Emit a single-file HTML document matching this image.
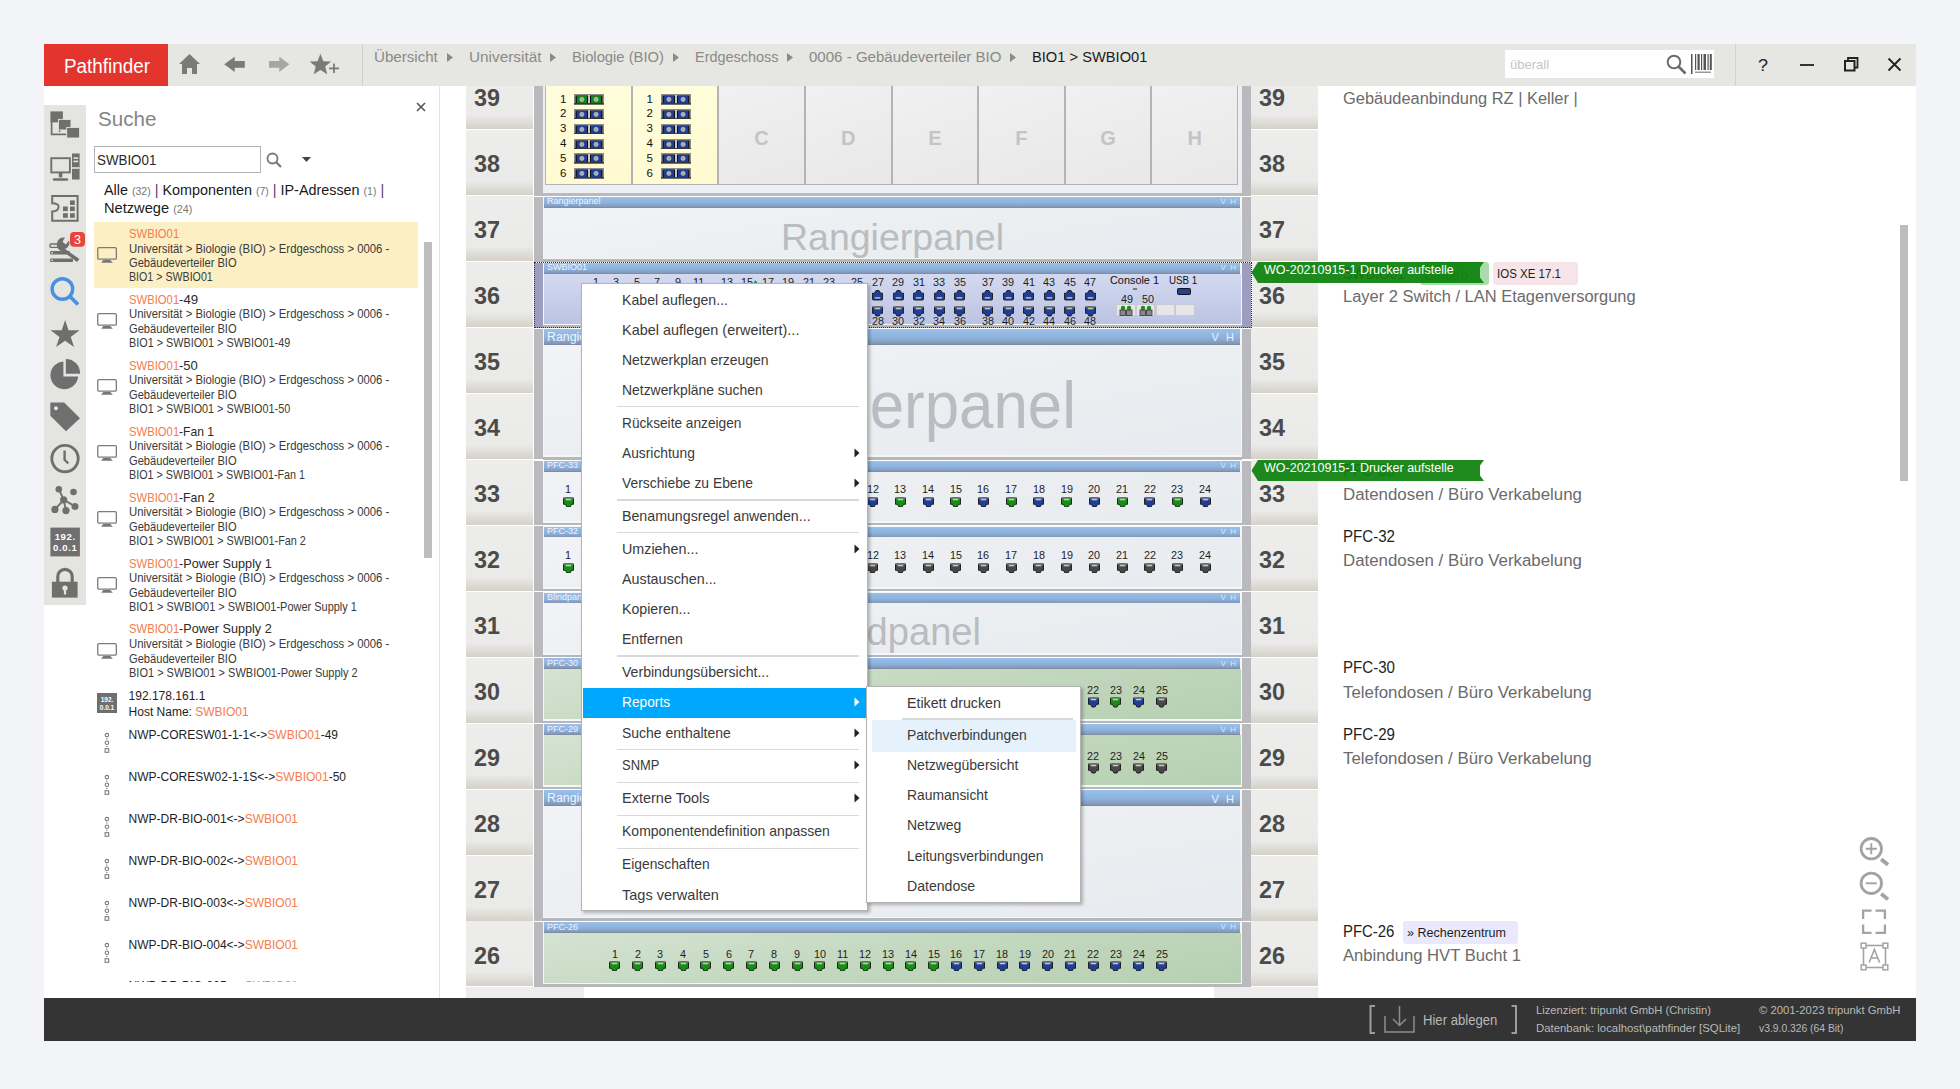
<!DOCTYPE html>
<html><head><meta charset="utf-8"><title>Pathfinder</title>
<style>
html,body{margin:0;padding:0;}
body{width:1960px;height:1089px;overflow:hidden;position:relative;background:#f3f4f8;font-family:"Liberation Sans",sans-serif;}
div{position:absolute;box-sizing:border-box;}
.t{white-space:pre;line-height:1;}
</style></head><body>
<svg width="0" height="0" style="position:absolute;left:0;top:0">
<defs>
<g id="pd"><path d="M0.5 1.5 Q0.5 0.5 1.5 0.5 H9.5 Q10.5 0.5 10.5 1.5 V7.3 H8.6 L7 10 H4 L2.4 7.3 H0.5 Z" stroke="#151515" stroke-width="0.9"/><rect x="1" y="0.3" width="9" height="1.3" fill="#8f8f8f"/><rect x="2.8" y="1.9" width="5.4" height="1.4" fill="#cbc9b2"/></g>
<g id="pu"><path d="M0.5 9 Q0.5 10 1.5 10 H9.5 Q10.5 10 10.5 9 V3.2 H8.6 L7 0.5 H4 L2.4 3.2 H0.5 Z" stroke="#151515" stroke-width="0.9"/><rect x="2.8" y="7.2" width="5.4" height="1.4" fill="#cbc9b2"/></g>
</defs></svg>
<div style="left:44px;top:44px;width:1872px;height:997px;background:#ffffff;"></div>
<div style="left:44px;top:44px;width:1872px;height:42px;background:#e6e6e2;"></div>
<div style="left:44px;top:44px;width:124px;height:42px;background:#e3352e;"></div>
<div class="t" style="left:63.60px;top:56.07px;font-size:20px;color:#ffffff;transform:scaleX(0.9432);transform-origin:0 0;">Pathfinder</div>
<svg style="position:absolute;left:178px;top:53px;" width="23" height="22" viewBox="0 0 23 22"><path d="M11.5 1 L1 11 L4 11 L4 21 L9 21 L9 15 L14 15 L14 21 L19 21 L19 11 L22 11 Z" fill="#7a7a7a"/></svg>
<svg style="position:absolute;left:220px;top:50px;" width="30" height="28" viewBox="0 0 30 28"><path d="M4.2 14.3 L14.7 6.7 L14.7 10.9 L24.8 10.9 L24.8 17.7 L14.7 17.7 L14.7 22 Z" fill="#7a7a7a"/></svg>
<svg style="position:absolute;left:265px;top:50px;" width="30" height="28" viewBox="0 0 30 28"><path d="M24.4 14.3 L14.3 6.7 L14.3 10.9 L4 10.9 L4 17.7 L14.3 17.7 L14.3 22 Z" fill="#a6a6a4"/></svg>
<svg style="position:absolute;left:305px;top:50px;" width="40" height="28" viewBox="0 0 40 28"><path d="M15.4 3.7 L18.3 11.3 L26.2 11.6 L20.2 16.6 L22.2 24.2 L15.4 19.9 L8.7 24.2 L10.7 16.6 L4.6 11.6 L12.5 11.3 Z" fill="#7a7a7a"/><rect x="24" y="17.5" width="10" height="1.8" fill="#7a7a7a"/><rect x="28.1" y="13.6" width="1.8" height="9.4" fill="#7a7a7a"/></svg>
<div style="left:362px;top:44px;width:1px;height:42px;background:#cfcfcb;"></div>
<div class="t" style="left:374.20px;top:49.28px;font-size:15.5px;color:#8a8a88;transform:scaleX(0.9745);transform-origin:0 0;">Übersicht</div>
<svg style="position:absolute;left:446.5px;top:53px;" width="6" height="9" viewBox="0 0 6 9"><path d="M0 0 L6 4.5 L0 9 Z" fill="#8a8a88"/></svg>
<div class="t" style="left:469.00px;top:49.28px;font-size:15.5px;color:#8a8a88;transform:scaleX(0.9902);transform-origin:0 0;">Universität</div>
<svg style="position:absolute;left:550.0px;top:53px;" width="6" height="9" viewBox="0 0 6 9"><path d="M0 0 L6 4.5 L0 9 Z" fill="#8a8a88"/></svg>
<div class="t" style="left:572.00px;top:49.28px;font-size:15.5px;color:#8a8a88;transform:scaleX(0.9535);transform-origin:0 0;">Biologie (BIO)</div>
<svg style="position:absolute;left:672.5px;top:53px;" width="6" height="9" viewBox="0 0 6 9"><path d="M0 0 L6 4.5 L0 9 Z" fill="#8a8a88"/></svg>
<div class="t" style="left:694.90px;top:49.28px;font-size:15.5px;color:#8a8a88;transform:scaleX(0.9319);transform-origin:0 0;">Erdgeschoss</div>
<svg style="position:absolute;left:786.9px;top:53px;" width="6" height="9" viewBox="0 0 6 9"><path d="M0 0 L6 4.5 L0 9 Z" fill="#8a8a88"/></svg>
<div class="t" style="left:808.80px;top:49.28px;font-size:15.5px;color:#8a8a88;transform:scaleX(0.9714);transform-origin:0 0;">0006 - Gebäudeverteiler BIO</div>
<svg style="position:absolute;left:1009.8px;top:53px;" width="6" height="9" viewBox="0 0 6 9"><path d="M0 0 L6 4.5 L0 9 Z" fill="#8a8a88"/></svg>
<div class="t" style="left:1032.00px;top:49.28px;font-size:15.5px;color:#1b1b1b;transform:scaleX(0.9467);transform-origin:0 0;">BIO1 &gt; SWBIO01</div>
<div style="left:1505px;top:50px;width:209px;height:28px;background:#ffffff;"></div>
<div class="t" style="left:1510.00px;top:58.40px;font-size:13px;color:#c4c4c4;">überall</div>
<svg style="position:absolute;left:1666px;top:54px;" width="21" height="21" viewBox="0 0 21 21"><circle cx="8" cy="8" r="6.3" fill="none" stroke="#6b6b6b" stroke-width="2"/><path d="M12.5 12.5 L19.5 19.5" stroke="#6b6b6b" stroke-width="2.6"/></svg>
<svg style="position:absolute;left:1691px;top:54px;" width="21" height="20" viewBox="0 0 21 20"><rect x="0" y="0" width="1.5" height="20" fill="#555"/><rect x="4" y="0" width="1.2" height="16" fill="#555"/><rect x="6.5" y="0" width="2.2" height="16" fill="#555"/><rect x="10" y="0" width="1.2" height="16" fill="#555"/><rect x="12.5" y="0" width="2.5" height="16" fill="#555"/><rect x="16.5" y="0" width="1.2" height="16" fill="#555"/><rect x="18.8" y="0" width="2" height="16" fill="#555"/><rect x="4" y="17.5" width="16" height="1.5" fill="#999"/></svg>
<div style="left:1735px;top:44px;width:1px;height:42px;background:#d2d2ce;"></div>
<div class="t" style="left:1757.50px;top:56.81px;font-size:17px;color:#222;transform:scaleX(1.0577);transform-origin:0 0;">?</div>
<div style="left:1800px;top:64px;width:14px;height:1.6px;background:#333;"></div>
<svg style="position:absolute;left:1844px;top:57px;" width="15" height="15" viewBox="0 0 15 15"><rect x="1" y="4" width="9.5" height="9.5" fill="none" stroke="#222" stroke-width="2"/><path d="M4 4 L4 1 L13.5 1 L13.5 10.5 L10.5 10.5" fill="none" stroke="#222" stroke-width="1.8"/></svg>
<svg style="position:absolute;left:1887px;top:57px;" width="15" height="15" viewBox="0 0 15 15"><path d="M1.5 1.5 L13.5 13.5 M13.5 1.5 L1.5 13.5" stroke="#222" stroke-width="1.8"/></svg>
<div style="left:44px;top:105px;width:42px;height:500px;background:#e4e4e0;"></div>
<svg style="position:absolute;left:44px;top:105px;" width="42" height="36" viewBox="0 0 42 36"><path d="M7.6 17 V29.3 H22.7 M15.6 25 V27" fill="none" stroke="#6f6f6f" stroke-width="1.7"/><rect x="6.4" y="6.4" width="12.5" height="11" fill="#6f6f6f"/><rect x="14.4" y="14.4" width="12.6" height="10.6" fill="#6f6f6f" stroke="#e4e4e0" stroke-width="0.9"/><rect x="22.7" y="22.4" width="12.9" height="10.6" fill="#6f6f6f" stroke="#e4e4e0" stroke-width="0.9"/></svg>
<svg style="position:absolute;left:44px;top:150px;" width="42" height="32" viewBox="0 0 42 32"><rect x="7.3" y="8.2" width="18.6" height="14.2" fill="none" stroke="#6f6f6f" stroke-width="1.9"/><rect x="14.8" y="22.4" width="3.6" height="5" fill="#6f6f6f"/><path d="M10 29.5 H23" stroke="#6f6f6f" stroke-width="2.4" stroke-linecap="round"/><rect x="28" y="3.5" width="7.6" height="26" fill="#6f6f6f"/><rect x="29.5" y="7.3" width="4.6" height="1.6" fill="#e4e4e0"/><rect x="29.5" y="10.6" width="4.6" height="1.6" fill="#e4e4e0"/><rect x="28" y="17.2" width="7.6" height="1.6" fill="#e4e4e0"/></svg>
<svg style="position:absolute;left:44px;top:192px;" width="42" height="32" viewBox="0 0 42 32"><path d="M8.2 4.1 H33.6 V28.8 H8.2 V19.5 Q14.5 19.5 14.6 14.5 Q14.5 11.5 8.2 11.3 Z" fill="none" stroke="#6f6f6f" stroke-width="2"/><rect x="26" y="8.4" width="4.8" height="4.6" fill="#6f6f6f"/><rect x="19" y="14.5" width="4.8" height="4.6" fill="#6f6f6f"/><rect x="26" y="14.5" width="4.8" height="4.6" fill="#6f6f6f"/><rect x="19" y="21.2" width="4.8" height="4.6" fill="#6f6f6f"/><rect x="26" y="21.2" width="4.8" height="4.6" fill="#6f6f6f"/></svg>
<svg style="position:absolute;left:44px;top:230px;" width="42" height="35" viewBox="0 0 42 35"><rect x="6" y="14" width="11" height="3.4" rx="1.2" fill="none" stroke="#6f6f6f" stroke-width="1.4"/><rect x="6" y="21" width="20" height="3.6" rx="1.2" fill="#6f6f6f"/><rect x="6" y="28.5" width="23" height="3.6" rx="1.2" fill="#6f6f6f"/><circle cx="8" cy="22.8" r="0.9" fill="#e4e4e0"/><circle cx="8" cy="30.3" r="0.9" fill="#e4e4e0"/><path d="M13 13 A6.5 6.5 0 0 1 21 7.6 L18.5 11.8 L21.8 14.6 L25 10.5 A6.5 6.5 0 0 1 21 19 L35.5 29 L33 32 L18.6 21.2 A6.5 6.5 0 0 1 13 13 Z" fill="#6f6f6f"/></svg>
<svg style="position:absolute;left:70px;top:232px;" width="15" height="15" viewBox="0 0 15 15"><rect x="0" y="0" width="15" height="14.7" rx="4" fill="#e5463c"/><text x="7.5" y="12" font-family="Liberation Sans" font-size="12.5" fill="#fff" text-anchor="middle">3</text></svg>
<svg style="position:absolute;left:44px;top:270px;" width="42" height="40" viewBox="0 0 42 40"><circle cx="18.4" cy="19" r="10.3" fill="none" stroke="#4a90e2" stroke-width="3.4"/><path d="M26 26.5 L34 34.5" stroke="#4a90e2" stroke-width="3.8"/></svg>
<svg style="position:absolute;left:44px;top:318px;" width="42" height="32" viewBox="0 0 42 32"><path d="M21.1 2 L24.5 12.2 L35.6 12.3 L26.7 19 L30.1 29 L21.1 22.8 L12.1 29 L15.5 19 L6.6 12.3 L17.7 12.2 Z" fill="#6f6f6f"/></svg>
<svg style="position:absolute;left:44px;top:358px;" width="42" height="34" viewBox="0 0 42 34"><path d="M19.4 3.4 A13.9 13.9 0 1 0 34.2 18.6 L19.4 18.6 Z" fill="#6f6f6f"/><path d="M21.8 1 A14.2 14.2 0 0 1 36 15.8 L21.8 15.8 Z" fill="#6f6f6f"/></svg>
<svg style="position:absolute;left:44px;top:400px;" width="42" height="34" viewBox="0 0 42 34"><path d="M6.3 2.5 H20.2 L36 18.2 L22 31.3 L6.3 15.8 Z" fill="#6f6f6f"/><circle cx="12" cy="8.2" r="2" fill="#e4e4e0"/></svg>
<svg style="position:absolute;left:44px;top:442px;" width="42" height="34" viewBox="0 0 42 34"><circle cx="21" cy="16.6" r="13.2" fill="none" stroke="#6f6f6f" stroke-width="2.9"/><path d="M20.6 8.5 V17.8 L24.3 21.3" fill="none" stroke="#6f6f6f" stroke-width="2.4"/></svg>
<svg style="position:absolute;left:44px;top:484px;" width="42" height="34" viewBox="0 0 42 34"><path d="M14.8 5.2 L19.7 15.8 L10.9 25.4 M19.7 15.8 L22 26.6 M19.7 15.8 L31 22.4" fill="none" stroke="#6f6f6f" stroke-width="1.9"/><circle cx="14.8" cy="5.2" r="3.3" fill="#6f6f6f"/><circle cx="29.5" cy="8" r="3.3" fill="#6f6f6f"/><circle cx="19.7" cy="15.8" r="3.6" fill="#6f6f6f"/><circle cx="10.9" cy="25.4" r="3.6" fill="#6f6f6f"/><circle cx="22" cy="26.6" r="3.6" fill="#6f6f6f"/><circle cx="31" cy="22.4" r="3.5" fill="#6f6f6f"/></svg>
<svg style="position:absolute;left:44px;top:526px;" width="42" height="32" viewBox="0 0 42 32"><rect x="6.4" y="1.6" width="29.5" height="28.8" fill="#6f6f6f"/><text x="21.2" y="14" font-family="Liberation Sans" font-size="9.6" font-weight="bold" letter-spacing="0.6" fill="#fff" text-anchor="middle">192.</text><text x="21.2" y="25.4" font-family="Liberation Sans" font-size="9.6" font-weight="bold" letter-spacing="0.6" fill="#fff" text-anchor="middle">0.0.1</text></svg>
<svg style="position:absolute;left:44px;top:566px;" width="42" height="34" viewBox="0 0 42 34"><path d="M13.8 16 V10.5 A7.2 7.2 0 0 1 28.2 10.5 V16" fill="none" stroke="#6f6f6f" stroke-width="3.2"/><rect x="7.9" y="15.7" width="25.7" height="15.9" fill="#6f6f6f"/><circle cx="21" cy="22" r="2.6" fill="#e4e4e0"/><rect x="19.9" y="22" width="2.2" height="6.5" fill="#e4e4e0"/></svg>
<div style="left:439px;top:86px;width:1px;height:912px;background:#e3e3ea;"></div>
<div class="t" style="left:98.00px;top:108.42px;font-size:21px;color:#858585;transform:scaleX(0.9807);transform-origin:0 0;">Suche</div>
<svg style="position:absolute;left:416px;top:101.5px;" width="10" height="10" viewBox="0 0 10 10"><path d="M1 1 L9 9 M9 1 L1 9" stroke="#555" stroke-width="1.6"/></svg>
<div style="left:94px;top:146px;width:167px;height:27px;background:#fff;border:1px solid #b4b4b4;"></div>
<div class="t" style="left:97.40px;top:152.95px;font-size:14px;color:#2a2a2a;transform:scaleX(0.9527);transform-origin:0 0;">SWBIO01</div>
<svg style="position:absolute;left:266px;top:152px;" width="17" height="16" viewBox="0 0 17 16"><circle cx="6.5" cy="6.5" r="5" fill="none" stroke="#777" stroke-width="1.8"/><path d="M10 10 L15 15" stroke="#777" stroke-width="2.2"/></svg>
<svg style="position:absolute;left:302px;top:157px;" width="9" height="5" viewBox="0 0 9 5"><path d="M0 0 H9 L4.5 5 Z" fill="#444"/></svg>
<div class="t" style="left:104.4px;top:181.50px;font-size:15px;color:#1a1a1a;transform:scaleX(0.958);transform-origin:0 0;">Alle <span style="font-size:11px;color:#777">(32)</span> <span style="color:#5b3a6b">|</span> Komponenten <span style="font-size:11px;color:#777">(7)</span> <span style="color:#5b3a6b">|</span> IP-Adressen <span style="font-size:11px;color:#777">(1)</span> <span style="color:#5b3a6b">|</span></div>
<div class="t" style="left:104.4px;top:199.90px;font-size:15px;color:#1a1a1a;transform:scaleX(0.976);transform-origin:0 0;">Netzwege <span style="font-size:11px;color:#777">(24)</span></div>
<div style="left:94px;top:222px;width:324px;height:66px;background:#fdefc4;"></div>
<svg style="position:absolute;left:97px;top:246.3px;" width="21" height="18" viewBox="0 0 21 18"><rect x="0.75" y="1.6" width="18.6" height="11.6" rx="1.2" fill="none" stroke="#7c7c7c" stroke-width="1.3"/><path d="M6.3 14.1 H13.3 L15.8 16.8 H4.2 Z" fill="#777"/></svg>
<div class="t" style="left:128.60px;top:227.90px;font-size:12.4px;color:#f47c4e;transform:scaleX(0.9106);transform-origin:0 0;">SWBIO01</div>
<div class="t" style="left:128.60px;top:242.50px;font-size:12.4px;color:#3a3a3a;transform:scaleX(0.9140);transform-origin:0 0;">Universität &gt; Biologie (BIO) &gt; Erdgeschoss &gt; 0006 -</div>
<div class="t" style="left:128.60px;top:257.40px;font-size:12.4px;color:#3a3a3a;transform:scaleX(0.8980);transform-origin:0 0;">Gebäudeverteiler BIO</div>
<div class="t" style="left:128.60px;top:271.40px;font-size:12.4px;color:#3a3a3a;transform:scaleX(0.8593);transform-origin:0 0;">BIO1 &gt; SWBIO01</div>
<svg style="position:absolute;left:97px;top:312.22px;" width="21" height="18" viewBox="0 0 21 18"><rect x="0.75" y="1.6" width="18.6" height="11.6" rx="1.2" fill="none" stroke="#7c7c7c" stroke-width="1.3"/><path d="M6.3 14.1 H13.3 L15.8 16.8 H4.2 Z" fill="#777"/></svg>
<div class="t" style="left:128.60px;top:293.82px;font-size:12.4px;color:#f47c4e;transform:scaleX(0.9106);transform-origin:0 0;">SWBIO01</div>
<div class="t" style="left:179.20px;top:293.82px;font-size:12.4px;color:#2a2a2a;transform:scaleX(1.0713);transform-origin:0 0;">-49</div>
<div class="t" style="left:128.60px;top:308.42px;font-size:12.4px;color:#3a3a3a;transform:scaleX(0.9140);transform-origin:0 0;">Universität &gt; Biologie (BIO) &gt; Erdgeschoss &gt; 0006 -</div>
<div class="t" style="left:128.60px;top:323.32px;font-size:12.4px;color:#3a3a3a;transform:scaleX(0.8980);transform-origin:0 0;">Gebäudeverteiler BIO</div>
<div class="t" style="left:128.60px;top:337.32px;font-size:12.4px;color:#3a3a3a;transform:scaleX(0.8733);transform-origin:0 0;">BIO1 &gt; SWBIO01 &gt; SWBIO01-49</div>
<svg style="position:absolute;left:97px;top:378.14000000000004px;" width="21" height="18" viewBox="0 0 21 18"><rect x="0.75" y="1.6" width="18.6" height="11.6" rx="1.2" fill="none" stroke="#7c7c7c" stroke-width="1.3"/><path d="M6.3 14.1 H13.3 L15.8 16.8 H4.2 Z" fill="#777"/></svg>
<div class="t" style="left:128.60px;top:359.74px;font-size:12.4px;color:#f47c4e;transform:scaleX(0.9106);transform-origin:0 0;">SWBIO01</div>
<div class="t" style="left:179.20px;top:359.74px;font-size:12.4px;color:#2a2a2a;transform:scaleX(1.0545);transform-origin:0 0;">-50</div>
<div class="t" style="left:128.60px;top:374.34px;font-size:12.4px;color:#3a3a3a;transform:scaleX(0.9140);transform-origin:0 0;">Universität &gt; Biologie (BIO) &gt; Erdgeschoss &gt; 0006 -</div>
<div class="t" style="left:128.60px;top:389.24px;font-size:12.4px;color:#3a3a3a;transform:scaleX(0.8980);transform-origin:0 0;">Gebäudeverteiler BIO</div>
<div class="t" style="left:128.60px;top:403.24px;font-size:12.4px;color:#3a3a3a;transform:scaleX(0.8733);transform-origin:0 0;">BIO1 &gt; SWBIO01 &gt; SWBIO01-50</div>
<svg style="position:absolute;left:97px;top:444.06px;" width="21" height="18" viewBox="0 0 21 18"><rect x="0.75" y="1.6" width="18.6" height="11.6" rx="1.2" fill="none" stroke="#7c7c7c" stroke-width="1.3"/><path d="M6.3 14.1 H13.3 L15.8 16.8 H4.2 Z" fill="#777"/></svg>
<div class="t" style="left:128.60px;top:425.66px;font-size:12.4px;color:#f47c4e;transform:scaleX(0.9106);transform-origin:0 0;">SWBIO01</div>
<div class="t" style="left:179.20px;top:425.66px;font-size:12.4px;color:#2a2a2a;transform:scaleX(0.9794);transform-origin:0 0;">-Fan 1</div>
<div class="t" style="left:128.60px;top:440.26px;font-size:12.4px;color:#3a3a3a;transform:scaleX(0.9140);transform-origin:0 0;">Universität &gt; Biologie (BIO) &gt; Erdgeschoss &gt; 0006 -</div>
<div class="t" style="left:128.60px;top:455.16px;font-size:12.4px;color:#3a3a3a;transform:scaleX(0.8980);transform-origin:0 0;">Gebäudeverteiler BIO</div>
<div class="t" style="left:128.60px;top:469.16px;font-size:12.4px;color:#3a3a3a;transform:scaleX(0.8696);transform-origin:0 0;">BIO1 &gt; SWBIO01 &gt; SWBIO01-Fan 1</div>
<svg style="position:absolute;left:97px;top:509.98px;" width="21" height="18" viewBox="0 0 21 18"><rect x="0.75" y="1.6" width="18.6" height="11.6" rx="1.2" fill="none" stroke="#7c7c7c" stroke-width="1.3"/><path d="M6.3 14.1 H13.3 L15.8 16.8 H4.2 Z" fill="#777"/></svg>
<div class="t" style="left:128.60px;top:491.58px;font-size:12.4px;color:#f47c4e;transform:scaleX(0.9106);transform-origin:0 0;">SWBIO01</div>
<div class="t" style="left:179.20px;top:491.58px;font-size:12.4px;color:#2a2a2a;transform:scaleX(0.9933);transform-origin:0 0;">-Fan 2</div>
<div class="t" style="left:128.60px;top:506.18px;font-size:12.4px;color:#3a3a3a;transform:scaleX(0.9140);transform-origin:0 0;">Universität &gt; Biologie (BIO) &gt; Erdgeschoss &gt; 0006 -</div>
<div class="t" style="left:128.60px;top:521.08px;font-size:12.4px;color:#3a3a3a;transform:scaleX(0.8980);transform-origin:0 0;">Gebäudeverteiler BIO</div>
<div class="t" style="left:128.60px;top:535.08px;font-size:12.4px;color:#3a3a3a;transform:scaleX(0.8736);transform-origin:0 0;">BIO1 &gt; SWBIO01 &gt; SWBIO01-Fan 2</div>
<svg style="position:absolute;left:97px;top:575.9px;" width="21" height="18" viewBox="0 0 21 18"><rect x="0.75" y="1.6" width="18.6" height="11.6" rx="1.2" fill="none" stroke="#7c7c7c" stroke-width="1.3"/><path d="M6.3 14.1 H13.3 L15.8 16.8 H4.2 Z" fill="#777"/></svg>
<div class="t" style="left:128.60px;top:557.50px;font-size:12.4px;color:#f47c4e;transform:scaleX(0.9106);transform-origin:0 0;">SWBIO01</div>
<div class="t" style="left:179.20px;top:557.50px;font-size:12.4px;color:#2a2a2a;transform:scaleX(1.0211);transform-origin:0 0;">-Power Supply 1</div>
<div class="t" style="left:128.60px;top:572.10px;font-size:12.4px;color:#3a3a3a;transform:scaleX(0.9140);transform-origin:0 0;">Universität &gt; Biologie (BIO) &gt; Erdgeschoss &gt; 0006 -</div>
<div class="t" style="left:128.60px;top:587.00px;font-size:12.4px;color:#3a3a3a;transform:scaleX(0.8980);transform-origin:0 0;">Gebäudeverteiler BIO</div>
<div class="t" style="left:128.60px;top:601.00px;font-size:12.4px;color:#3a3a3a;transform:scaleX(0.8849);transform-origin:0 0;">BIO1 &gt; SWBIO01 &gt; SWBIO01-Power Supply 1</div>
<svg style="position:absolute;left:97px;top:641.8199999999999px;" width="21" height="18" viewBox="0 0 21 18"><rect x="0.75" y="1.6" width="18.6" height="11.6" rx="1.2" fill="none" stroke="#7c7c7c" stroke-width="1.3"/><path d="M6.3 14.1 H13.3 L15.8 16.8 H4.2 Z" fill="#777"/></svg>
<div class="t" style="left:128.60px;top:623.42px;font-size:12.4px;color:#f47c4e;transform:scaleX(0.9106);transform-origin:0 0;">SWBIO01</div>
<div class="t" style="left:179.20px;top:623.42px;font-size:12.4px;color:#2a2a2a;transform:scaleX(1.0200);transform-origin:0 0;">-Power Supply 2</div>
<div class="t" style="left:128.60px;top:638.02px;font-size:12.4px;color:#3a3a3a;transform:scaleX(0.9140);transform-origin:0 0;">Universität &gt; Biologie (BIO) &gt; Erdgeschoss &gt; 0006 -</div>
<div class="t" style="left:128.60px;top:652.92px;font-size:12.4px;color:#3a3a3a;transform:scaleX(0.8980);transform-origin:0 0;">Gebäudeverteiler BIO</div>
<div class="t" style="left:128.60px;top:666.92px;font-size:12.4px;color:#3a3a3a;transform:scaleX(0.8880);transform-origin:0 0;">BIO1 &gt; SWBIO01 &gt; SWBIO01-Power Supply 2</div>
<svg style="position:absolute;left:97px;top:693px;" width="20" height="20" viewBox="0 0 20 20"><rect x="0" y="0" width="20" height="20" fill="#6f6f6f"/><text x="10" y="8.5" font-family="Liberation Sans" font-size="6.5" font-weight="bold" fill="#fff" text-anchor="middle">192.</text><text x="10" y="16.5" font-family="Liberation Sans" font-size="6.5" font-weight="bold" fill="#fff" text-anchor="middle">0.0.1</text></svg>
<div class="t" style="left:128.60px;top:689.84px;font-size:12px;color:#1e1e1e;">192.178.161.1</div>
<div class="t" style="left:128.6px;top:705.84px;font-size:12px;color:#1e1e1e;">Host Name: <span style="color:#f47c4e">SWBIO01</span></div>
<svg style="position:absolute;left:103px;top:732.1px;" width="8" height="22" viewBox="0 0 8 22"><circle cx="3.9" cy="3.1" r="1.75" fill="none" stroke="#777" stroke-width="1.05"/><circle cx="3.9" cy="6.95" r="0.75" fill="#888"/><circle cx="3.9" cy="10.7" r="1.75" fill="none" stroke="#777" stroke-width="1.05"/><circle cx="3.9" cy="14.6" r="0.75" fill="#888"/><rect x="2.1" y="16.7" width="3.6" height="3.6" fill="none" stroke="#777" stroke-width="1.05"/></svg>
<div class="t" style="left:128.6px;top:729.04px;font-size:12px;color:#1e1e1e;">NWP-CORESW01-1-1&lt;-&gt;<span style="color:#f47c4e">SWBIO01</span>-49</div>
<svg style="position:absolute;left:103px;top:774.0px;" width="8" height="22" viewBox="0 0 8 22"><circle cx="3.9" cy="3.1" r="1.75" fill="none" stroke="#777" stroke-width="1.05"/><circle cx="3.9" cy="6.95" r="0.75" fill="#888"/><circle cx="3.9" cy="10.7" r="1.75" fill="none" stroke="#777" stroke-width="1.05"/><circle cx="3.9" cy="14.6" r="0.75" fill="#888"/><rect x="2.1" y="16.7" width="3.6" height="3.6" fill="none" stroke="#777" stroke-width="1.05"/></svg>
<div class="t" style="left:128.6px;top:770.94px;font-size:12px;color:#1e1e1e;">NWP-CORESW02-1-1S&lt;-&gt;<span style="color:#f47c4e">SWBIO01</span>-50</div>
<svg style="position:absolute;left:103px;top:815.9px;" width="8" height="22" viewBox="0 0 8 22"><circle cx="3.9" cy="3.1" r="1.75" fill="none" stroke="#777" stroke-width="1.05"/><circle cx="3.9" cy="6.95" r="0.75" fill="#888"/><circle cx="3.9" cy="10.7" r="1.75" fill="none" stroke="#777" stroke-width="1.05"/><circle cx="3.9" cy="14.6" r="0.75" fill="#888"/><rect x="2.1" y="16.7" width="3.6" height="3.6" fill="none" stroke="#777" stroke-width="1.05"/></svg>
<div class="t" style="left:128.6px;top:812.84px;font-size:12px;color:#1e1e1e;">NWP-DR-BIO-001&lt;-&gt;<span style="color:#f47c4e">SWBIO01</span></div>
<svg style="position:absolute;left:103px;top:857.8000000000001px;" width="8" height="22" viewBox="0 0 8 22"><circle cx="3.9" cy="3.1" r="1.75" fill="none" stroke="#777" stroke-width="1.05"/><circle cx="3.9" cy="6.95" r="0.75" fill="#888"/><circle cx="3.9" cy="10.7" r="1.75" fill="none" stroke="#777" stroke-width="1.05"/><circle cx="3.9" cy="14.6" r="0.75" fill="#888"/><rect x="2.1" y="16.7" width="3.6" height="3.6" fill="none" stroke="#777" stroke-width="1.05"/></svg>
<div class="t" style="left:128.6px;top:854.74px;font-size:12px;color:#1e1e1e;">NWP-DR-BIO-002&lt;-&gt;<span style="color:#f47c4e">SWBIO01</span></div>
<svg style="position:absolute;left:103px;top:899.7px;" width="8" height="22" viewBox="0 0 8 22"><circle cx="3.9" cy="3.1" r="1.75" fill="none" stroke="#777" stroke-width="1.05"/><circle cx="3.9" cy="6.95" r="0.75" fill="#888"/><circle cx="3.9" cy="10.7" r="1.75" fill="none" stroke="#777" stroke-width="1.05"/><circle cx="3.9" cy="14.6" r="0.75" fill="#888"/><rect x="2.1" y="16.7" width="3.6" height="3.6" fill="none" stroke="#777" stroke-width="1.05"/></svg>
<div class="t" style="left:128.6px;top:896.64px;font-size:12px;color:#1e1e1e;">NWP-DR-BIO-003&lt;-&gt;<span style="color:#f47c4e">SWBIO01</span></div>
<svg style="position:absolute;left:103px;top:941.6px;" width="8" height="22" viewBox="0 0 8 22"><circle cx="3.9" cy="3.1" r="1.75" fill="none" stroke="#777" stroke-width="1.05"/><circle cx="3.9" cy="6.95" r="0.75" fill="#888"/><circle cx="3.9" cy="10.7" r="1.75" fill="none" stroke="#777" stroke-width="1.05"/><circle cx="3.9" cy="14.6" r="0.75" fill="#888"/><rect x="2.1" y="16.7" width="3.6" height="3.6" fill="none" stroke="#777" stroke-width="1.05"/></svg>
<div class="t" style="left:128.6px;top:938.54px;font-size:12px;color:#1e1e1e;">NWP-DR-BIO-004&lt;-&gt;<span style="color:#f47c4e">SWBIO01</span></div>
<svg style="position:absolute;left:103px;top:983.5px;" width="8" height="22" viewBox="0 0 8 22"><circle cx="3.9" cy="3.1" r="1.75" fill="none" stroke="#777" stroke-width="1.05"/><circle cx="3.9" cy="6.95" r="0.75" fill="#888"/><circle cx="3.9" cy="10.7" r="1.75" fill="none" stroke="#777" stroke-width="1.05"/><circle cx="3.9" cy="14.6" r="0.75" fill="#888"/><rect x="2.1" y="16.7" width="3.6" height="3.6" fill="none" stroke="#777" stroke-width="1.05"/></svg>
<div class="t" style="left:128.6px;top:980.44px;font-size:12px;color:#1e1e1e;">NWP-DR-BIO-005&lt;-&gt;<span style="color:#f47c4e">SWBIO01</span></div>
<div style="left:86px;top:982px;width:353px;height:16px;background:#fff;"></div>
<div style="left:424px;top:242px;width:8px;height:316px;background:#bdbdbd;"></div>
<div style="left:440px;top:86px;width:1476px;height:912px;overflow:hidden"><div style="left:-440px;top:-86px;width:1960px;height:1089px">
<div style="left:466px;top:987.3999999999999px;width:67px;height:65px;background:linear-gradient(#ededeb,#eaeae8 78%,#d5d1c9);"></div>
<div class="t" style="left:474.00px;top:1010.43px;font-size:23px;color:#4b4b4b;font-weight:bold;transform:scaleX(1.0163);transform-origin:0 0;">25</div>
<div style="left:1251px;top:987.3999999999999px;width:67px;height:65px;background:linear-gradient(#ededeb,#eaeae8 78%,#d5d1c9);"></div>
<div class="t" style="left:1259.00px;top:1010.43px;font-size:23px;color:#4b4b4b;font-weight:bold;transform:scaleX(1.0163);transform-origin:0 0;">25</div>
<div style="left:466px;top:921.4749999999999px;width:67px;height:65px;background:linear-gradient(#ededeb,#eaeae8 78%,#d5d1c9);"></div>
<div class="t" style="left:474.00px;top:944.51px;font-size:23px;color:#4b4b4b;font-weight:bold;transform:scaleX(1.0163);transform-origin:0 0;">26</div>
<div style="left:1251px;top:921.4749999999999px;width:67px;height:65px;background:linear-gradient(#ededeb,#eaeae8 78%,#d5d1c9);"></div>
<div class="t" style="left:1259.00px;top:944.51px;font-size:23px;color:#4b4b4b;font-weight:bold;transform:scaleX(1.0163);transform-origin:0 0;">26</div>
<div style="left:466px;top:855.55px;width:67px;height:65px;background:linear-gradient(#ededeb,#eaeae8 78%,#d5d1c9);"></div>
<div class="t" style="left:474.00px;top:878.58px;font-size:23px;color:#4b4b4b;font-weight:bold;transform:scaleX(1.0163);transform-origin:0 0;">27</div>
<div style="left:1251px;top:855.55px;width:67px;height:65px;background:linear-gradient(#ededeb,#eaeae8 78%,#d5d1c9);"></div>
<div class="t" style="left:1259.00px;top:878.58px;font-size:23px;color:#4b4b4b;font-weight:bold;transform:scaleX(1.0163);transform-origin:0 0;">27</div>
<div style="left:466px;top:789.625px;width:67px;height:65px;background:linear-gradient(#ededeb,#eaeae8 78%,#d5d1c9);"></div>
<div class="t" style="left:474.00px;top:812.66px;font-size:23px;color:#4b4b4b;font-weight:bold;transform:scaleX(1.0163);transform-origin:0 0;">28</div>
<div style="left:1251px;top:789.625px;width:67px;height:65px;background:linear-gradient(#ededeb,#eaeae8 78%,#d5d1c9);"></div>
<div class="t" style="left:1259.00px;top:812.66px;font-size:23px;color:#4b4b4b;font-weight:bold;transform:scaleX(1.0163);transform-origin:0 0;">28</div>
<div style="left:466px;top:723.7px;width:67px;height:65px;background:linear-gradient(#ededeb,#eaeae8 78%,#d5d1c9);"></div>
<div class="t" style="left:474.00px;top:746.73px;font-size:23px;color:#4b4b4b;font-weight:bold;transform:scaleX(1.0163);transform-origin:0 0;">29</div>
<div style="left:1251px;top:723.7px;width:67px;height:65px;background:linear-gradient(#ededeb,#eaeae8 78%,#d5d1c9);"></div>
<div class="t" style="left:1259.00px;top:746.73px;font-size:23px;color:#4b4b4b;font-weight:bold;transform:scaleX(1.0163);transform-origin:0 0;">29</div>
<div style="left:466px;top:657.775px;width:67px;height:65px;background:linear-gradient(#ededeb,#eaeae8 78%,#d5d1c9);"></div>
<div class="t" style="left:474.00px;top:680.81px;font-size:23px;color:#4b4b4b;font-weight:bold;transform:scaleX(1.0163);transform-origin:0 0;">30</div>
<div style="left:1251px;top:657.775px;width:67px;height:65px;background:linear-gradient(#ededeb,#eaeae8 78%,#d5d1c9);"></div>
<div class="t" style="left:1259.00px;top:680.81px;font-size:23px;color:#4b4b4b;font-weight:bold;transform:scaleX(1.0163);transform-origin:0 0;">30</div>
<div style="left:466px;top:591.8499999999999px;width:67px;height:65px;background:linear-gradient(#ededeb,#eaeae8 78%,#d5d1c9);"></div>
<div class="t" style="left:474.00px;top:614.88px;font-size:23px;color:#4b4b4b;font-weight:bold;transform:scaleX(1.0163);transform-origin:0 0;">31</div>
<div style="left:1251px;top:591.8499999999999px;width:67px;height:65px;background:linear-gradient(#ededeb,#eaeae8 78%,#d5d1c9);"></div>
<div class="t" style="left:1259.00px;top:614.88px;font-size:23px;color:#4b4b4b;font-weight:bold;transform:scaleX(1.0163);transform-origin:0 0;">31</div>
<div style="left:466px;top:525.925px;width:67px;height:65px;background:linear-gradient(#ededeb,#eaeae8 78%,#d5d1c9);"></div>
<div class="t" style="left:474.00px;top:548.96px;font-size:23px;color:#4b4b4b;font-weight:bold;transform:scaleX(1.0163);transform-origin:0 0;">32</div>
<div style="left:1251px;top:525.925px;width:67px;height:65px;background:linear-gradient(#ededeb,#eaeae8 78%,#d5d1c9);"></div>
<div class="t" style="left:1259.00px;top:548.96px;font-size:23px;color:#4b4b4b;font-weight:bold;transform:scaleX(1.0163);transform-origin:0 0;">32</div>
<div style="left:466px;top:460.0px;width:67px;height:65px;background:linear-gradient(#ededeb,#eaeae8 78%,#d5d1c9);"></div>
<div class="t" style="left:474.00px;top:483.03px;font-size:23px;color:#4b4b4b;font-weight:bold;transform:scaleX(1.0163);transform-origin:0 0;">33</div>
<div style="left:1251px;top:460.0px;width:67px;height:65px;background:linear-gradient(#ededeb,#eaeae8 78%,#d5d1c9);"></div>
<div class="t" style="left:1259.00px;top:483.03px;font-size:23px;color:#4b4b4b;font-weight:bold;transform:scaleX(1.0163);transform-origin:0 0;">33</div>
<div style="left:466px;top:394.075px;width:67px;height:65px;background:linear-gradient(#ededeb,#eaeae8 78%,#d5d1c9);"></div>
<div class="t" style="left:474.00px;top:417.11px;font-size:23px;color:#4b4b4b;font-weight:bold;transform:scaleX(1.0163);transform-origin:0 0;">34</div>
<div style="left:1251px;top:394.075px;width:67px;height:65px;background:linear-gradient(#ededeb,#eaeae8 78%,#d5d1c9);"></div>
<div class="t" style="left:1259.00px;top:417.11px;font-size:23px;color:#4b4b4b;font-weight:bold;transform:scaleX(1.0163);transform-origin:0 0;">34</div>
<div style="left:466px;top:328.15px;width:67px;height:65px;background:linear-gradient(#ededeb,#eaeae8 78%,#d5d1c9);"></div>
<div class="t" style="left:474.00px;top:351.18px;font-size:23px;color:#4b4b4b;font-weight:bold;transform:scaleX(1.0163);transform-origin:0 0;">35</div>
<div style="left:1251px;top:328.15px;width:67px;height:65px;background:linear-gradient(#ededeb,#eaeae8 78%,#d5d1c9);"></div>
<div class="t" style="left:1259.00px;top:351.18px;font-size:23px;color:#4b4b4b;font-weight:bold;transform:scaleX(1.0163);transform-origin:0 0;">35</div>
<div style="left:466px;top:262.225px;width:67px;height:65px;background:linear-gradient(#ededeb,#eaeae8 78%,#d5d1c9);"></div>
<div class="t" style="left:474.00px;top:285.26px;font-size:23px;color:#4b4b4b;font-weight:bold;transform:scaleX(1.0163);transform-origin:0 0;">36</div>
<div style="left:1251px;top:262.225px;width:67px;height:65px;background:linear-gradient(#ededeb,#eaeae8 78%,#d5d1c9);"></div>
<div class="t" style="left:1259.00px;top:285.26px;font-size:23px;color:#4b4b4b;font-weight:bold;transform:scaleX(1.0163);transform-origin:0 0;">36</div>
<div style="left:466px;top:196.3px;width:67px;height:65px;background:linear-gradient(#ededeb,#eaeae8 78%,#d5d1c9);"></div>
<div class="t" style="left:474.00px;top:219.33px;font-size:23px;color:#4b4b4b;font-weight:bold;transform:scaleX(1.0163);transform-origin:0 0;">37</div>
<div style="left:1251px;top:196.3px;width:67px;height:65px;background:linear-gradient(#ededeb,#eaeae8 78%,#d5d1c9);"></div>
<div class="t" style="left:1259.00px;top:219.33px;font-size:23px;color:#4b4b4b;font-weight:bold;transform:scaleX(1.0163);transform-origin:0 0;">37</div>
<div style="left:466px;top:130.375px;width:67px;height:65px;background:linear-gradient(#ededeb,#eaeae8 78%,#d5d1c9);"></div>
<div class="t" style="left:474.00px;top:153.41px;font-size:23px;color:#4b4b4b;font-weight:bold;transform:scaleX(1.0163);transform-origin:0 0;">38</div>
<div style="left:1251px;top:130.375px;width:67px;height:65px;background:linear-gradient(#ededeb,#eaeae8 78%,#d5d1c9);"></div>
<div class="t" style="left:1259.00px;top:153.41px;font-size:23px;color:#4b4b4b;font-weight:bold;transform:scaleX(1.0163);transform-origin:0 0;">38</div>
<div style="left:466px;top:64.45000000000002px;width:67px;height:65px;background:linear-gradient(#ededeb,#eaeae8 78%,#d5d1c9);"></div>
<div class="t" style="left:474.00px;top:87.48px;font-size:23px;color:#4b4b4b;font-weight:bold;transform:scaleX(1.0163);transform-origin:0 0;">39</div>
<div style="left:1251px;top:64.45000000000002px;width:67px;height:65px;background:linear-gradient(#ededeb,#eaeae8 78%,#d5d1c9);"></div>
<div class="t" style="left:1259.00px;top:87.48px;font-size:23px;color:#4b4b4b;font-weight:bold;transform:scaleX(1.0163);transform-origin:0 0;">39</div>
<div style="left:466px;top:987px;width:118px;height:11px;background:#ededed;"></div>
<div style="left:1214px;top:987px;width:104px;height:11px;background:#ededed;"></div>
<div style="left:534px;top:63.95000000000002px;width:8.5px;height:131.85px;background:#b9b9be;"></div>
<div style="left:1242px;top:63.95000000000002px;width:8.5px;height:131.85px;background:#b9b9be;"></div>
<div style="left:542.5px;top:193px;width:699.5px;height:3px;background:#b9babd;"></div>
<div style="left:542.5px;top:63.95000000000002px;width:699.5px;height:129.04999999999998px;background:#eceff3;"></div>
<div style="left:545.0px;top:63.95000000000002px;width:86.625px;height:121.54999999999998px;background:linear-gradient(160deg,#fffde0,#fffcd6 60%,#fff9d0);border:1.5px solid #b4b4b6;"></div>
<div style="left:631.625px;top:63.95000000000002px;width:86.625px;height:121.54999999999998px;background:linear-gradient(160deg,#fffde0,#fffcd6 60%,#fff9d0);border:1.5px solid #b4b4b6;"></div>
<div style="left:718.25px;top:63.95000000000002px;width:86.625px;height:121.54999999999998px;background:linear-gradient(160deg,#f2f2f2,#e8e8e8);border:1.5px solid #b4b4b6;"></div>
<div class="t" style="left:754.34px;top:128.27px;font-size:20px;color:#c4c4c4;font-weight:bold;">C</div>
<div style="left:804.875px;top:63.95000000000002px;width:86.625px;height:121.54999999999998px;background:linear-gradient(160deg,#f2f2f2,#e8e8e8);border:1.5px solid #b4b4b6;"></div>
<div class="t" style="left:840.97px;top:128.27px;font-size:20px;color:#c4c4c4;font-weight:bold;">D</div>
<div style="left:891.5px;top:63.95000000000002px;width:86.625px;height:121.54999999999998px;background:linear-gradient(160deg,#f2f2f2,#e8e8e8);border:1.5px solid #b4b4b6;"></div>
<div class="t" style="left:928.14px;top:128.27px;font-size:20px;color:#c4c4c4;font-weight:bold;">E</div>
<div style="left:978.125px;top:63.95000000000002px;width:86.625px;height:121.54999999999998px;background:linear-gradient(160deg,#f2f2f2,#e8e8e8);border:1.5px solid #b4b4b6;"></div>
<div class="t" style="left:1015.33px;top:128.27px;font-size:20px;color:#c4c4c4;font-weight:bold;">F</div>
<div style="left:1064.75px;top:63.95000000000002px;width:86.625px;height:121.54999999999998px;background:linear-gradient(160deg,#f2f2f2,#e8e8e8);border:1.5px solid #b4b4b6;"></div>
<div class="t" style="left:1100.28px;top:128.27px;font-size:20px;color:#c4c4c4;font-weight:bold;">G</div>
<div style="left:1151.375px;top:63.95000000000002px;width:86.625px;height:121.54999999999998px;background:linear-gradient(160deg,#f2f2f2,#e8e8e8);border:1.5px solid #b4b4b6;"></div>
<div class="t" style="left:1187.47px;top:128.27px;font-size:20px;color:#c4c4c4;font-weight:bold;">H</div>
<div class="t" style="left:560.00px;top:93.57px;font-size:11.5px;color:#111;">1</div>
<svg style="position:absolute;left:574.0px;top:94.0px;" width="30" height="10.5" viewBox="0 0 30 10.5"><rect x="0" y="0" width="30" height="10.5" fill="#8d8d8d"/><rect x="1.6" y="1.6" width="12.6" height="7.6" fill="#101010"/><rect x="15.8" y="1.6" width="12.6" height="7.6" fill="#101010"/><rect x="2.8" y="1.8" width="10.2" height="7.2" fill="#16801a"/><rect x="17" y="1.8" width="10.2" height="7.2" fill="#16801a"/><rect x="14.2" y="1" width="1.6" height="8.5" fill="#dcdcdc"/><circle cx="7.9" cy="5.4" r="2.1" fill="#a8a8a8" stroke="#d0d0d0" stroke-width="0.6"/><circle cx="22.1" cy="5.4" r="2.1" fill="#a8a8a8" stroke="#d0d0d0" stroke-width="0.6"/><rect x="0" y="9.3" width="30" height="1.2" fill="#1e1e1e"/></svg>
<div class="t" style="left:560.00px;top:108.41px;font-size:11.5px;color:#111;">2</div>
<svg style="position:absolute;left:574.0px;top:108.84px;" width="30" height="10.5" viewBox="0 0 30 10.5"><rect x="0" y="0" width="30" height="10.5" fill="#8d8d8d"/><rect x="1.6" y="1.6" width="12.6" height="7.6" fill="#101010"/><rect x="15.8" y="1.6" width="12.6" height="7.6" fill="#101010"/><rect x="2.8" y="1.8" width="10.2" height="7.2" fill="#1f3d95"/><rect x="17" y="1.8" width="10.2" height="7.2" fill="#1f3d95"/><rect x="14.2" y="1" width="1.6" height="8.5" fill="#dcdcdc"/><circle cx="7.9" cy="5.4" r="2.1" fill="#a8a8a8" stroke="#d0d0d0" stroke-width="0.6"/><circle cx="22.1" cy="5.4" r="2.1" fill="#a8a8a8" stroke="#d0d0d0" stroke-width="0.6"/><rect x="0" y="9.3" width="30" height="1.2" fill="#1e1e1e"/></svg>
<div class="t" style="left:560.00px;top:123.25px;font-size:11.5px;color:#111;">3</div>
<svg style="position:absolute;left:574.0px;top:123.68px;" width="30" height="10.5" viewBox="0 0 30 10.5"><rect x="0" y="0" width="30" height="10.5" fill="#8d8d8d"/><rect x="1.6" y="1.6" width="12.6" height="7.6" fill="#101010"/><rect x="15.8" y="1.6" width="12.6" height="7.6" fill="#101010"/><rect x="2.8" y="1.8" width="10.2" height="7.2" fill="#1f3d95"/><rect x="17" y="1.8" width="10.2" height="7.2" fill="#1f3d95"/><rect x="14.2" y="1" width="1.6" height="8.5" fill="#dcdcdc"/><circle cx="7.9" cy="5.4" r="2.1" fill="#a8a8a8" stroke="#d0d0d0" stroke-width="0.6"/><circle cx="22.1" cy="5.4" r="2.1" fill="#a8a8a8" stroke="#d0d0d0" stroke-width="0.6"/><rect x="0" y="9.3" width="30" height="1.2" fill="#1e1e1e"/></svg>
<div class="t" style="left:560.00px;top:138.09px;font-size:11.5px;color:#111;">4</div>
<svg style="position:absolute;left:574.0px;top:138.51999999999998px;" width="30" height="10.5" viewBox="0 0 30 10.5"><rect x="0" y="0" width="30" height="10.5" fill="#8d8d8d"/><rect x="1.6" y="1.6" width="12.6" height="7.6" fill="#101010"/><rect x="15.8" y="1.6" width="12.6" height="7.6" fill="#101010"/><rect x="2.8" y="1.8" width="10.2" height="7.2" fill="#1f3d95"/><rect x="17" y="1.8" width="10.2" height="7.2" fill="#1f3d95"/><rect x="14.2" y="1" width="1.6" height="8.5" fill="#dcdcdc"/><circle cx="7.9" cy="5.4" r="2.1" fill="#a8a8a8" stroke="#d0d0d0" stroke-width="0.6"/><circle cx="22.1" cy="5.4" r="2.1" fill="#a8a8a8" stroke="#d0d0d0" stroke-width="0.6"/><rect x="0" y="9.3" width="30" height="1.2" fill="#1e1e1e"/></svg>
<div class="t" style="left:560.00px;top:152.93px;font-size:11.5px;color:#111;">5</div>
<svg style="position:absolute;left:574.0px;top:153.36px;" width="30" height="10.5" viewBox="0 0 30 10.5"><rect x="0" y="0" width="30" height="10.5" fill="#8d8d8d"/><rect x="1.6" y="1.6" width="12.6" height="7.6" fill="#101010"/><rect x="15.8" y="1.6" width="12.6" height="7.6" fill="#101010"/><rect x="2.8" y="1.8" width="10.2" height="7.2" fill="#1f3d95"/><rect x="17" y="1.8" width="10.2" height="7.2" fill="#1f3d95"/><rect x="14.2" y="1" width="1.6" height="8.5" fill="#dcdcdc"/><circle cx="7.9" cy="5.4" r="2.1" fill="#a8a8a8" stroke="#d0d0d0" stroke-width="0.6"/><circle cx="22.1" cy="5.4" r="2.1" fill="#a8a8a8" stroke="#d0d0d0" stroke-width="0.6"/><rect x="0" y="9.3" width="30" height="1.2" fill="#1e1e1e"/></svg>
<div class="t" style="left:560.00px;top:167.77px;font-size:11.5px;color:#111;">6</div>
<svg style="position:absolute;left:574.0px;top:168.2px;" width="30" height="10.5" viewBox="0 0 30 10.5"><rect x="0" y="0" width="30" height="10.5" fill="#8d8d8d"/><rect x="1.6" y="1.6" width="12.6" height="7.6" fill="#101010"/><rect x="15.8" y="1.6" width="12.6" height="7.6" fill="#101010"/><rect x="2.8" y="1.8" width="10.2" height="7.2" fill="#1f3d95"/><rect x="17" y="1.8" width="10.2" height="7.2" fill="#1f3d95"/><rect x="14.2" y="1" width="1.6" height="8.5" fill="#dcdcdc"/><circle cx="7.9" cy="5.4" r="2.1" fill="#a8a8a8" stroke="#d0d0d0" stroke-width="0.6"/><circle cx="22.1" cy="5.4" r="2.1" fill="#a8a8a8" stroke="#d0d0d0" stroke-width="0.6"/><rect x="0" y="9.3" width="30" height="1.2" fill="#1e1e1e"/></svg>
<div class="t" style="left:646.62px;top:93.57px;font-size:11.5px;color:#111;">1</div>
<svg style="position:absolute;left:660.625px;top:94.0px;" width="30" height="10.5" viewBox="0 0 30 10.5"><rect x="0" y="0" width="30" height="10.5" fill="#8d8d8d"/><rect x="1.6" y="1.6" width="12.6" height="7.6" fill="#101010"/><rect x="15.8" y="1.6" width="12.6" height="7.6" fill="#101010"/><rect x="2.8" y="1.8" width="10.2" height="7.2" fill="#1f3d95"/><rect x="17" y="1.8" width="10.2" height="7.2" fill="#1f3d95"/><rect x="14.2" y="1" width="1.6" height="8.5" fill="#dcdcdc"/><circle cx="7.9" cy="5.4" r="2.1" fill="#a8a8a8" stroke="#d0d0d0" stroke-width="0.6"/><circle cx="22.1" cy="5.4" r="2.1" fill="#a8a8a8" stroke="#d0d0d0" stroke-width="0.6"/><rect x="0" y="9.3" width="30" height="1.2" fill="#1e1e1e"/></svg>
<div class="t" style="left:646.62px;top:108.41px;font-size:11.5px;color:#111;">2</div>
<svg style="position:absolute;left:660.625px;top:108.84px;" width="30" height="10.5" viewBox="0 0 30 10.5"><rect x="0" y="0" width="30" height="10.5" fill="#8d8d8d"/><rect x="1.6" y="1.6" width="12.6" height="7.6" fill="#101010"/><rect x="15.8" y="1.6" width="12.6" height="7.6" fill="#101010"/><rect x="2.8" y="1.8" width="10.2" height="7.2" fill="#1f3d95"/><rect x="17" y="1.8" width="10.2" height="7.2" fill="#1f3d95"/><rect x="14.2" y="1" width="1.6" height="8.5" fill="#dcdcdc"/><circle cx="7.9" cy="5.4" r="2.1" fill="#a8a8a8" stroke="#d0d0d0" stroke-width="0.6"/><circle cx="22.1" cy="5.4" r="2.1" fill="#a8a8a8" stroke="#d0d0d0" stroke-width="0.6"/><rect x="0" y="9.3" width="30" height="1.2" fill="#1e1e1e"/></svg>
<div class="t" style="left:646.62px;top:123.25px;font-size:11.5px;color:#111;">3</div>
<svg style="position:absolute;left:660.625px;top:123.68px;" width="30" height="10.5" viewBox="0 0 30 10.5"><rect x="0" y="0" width="30" height="10.5" fill="#8d8d8d"/><rect x="1.6" y="1.6" width="12.6" height="7.6" fill="#101010"/><rect x="15.8" y="1.6" width="12.6" height="7.6" fill="#101010"/><rect x="2.8" y="1.8" width="10.2" height="7.2" fill="#1f3d95"/><rect x="17" y="1.8" width="10.2" height="7.2" fill="#1f3d95"/><rect x="14.2" y="1" width="1.6" height="8.5" fill="#dcdcdc"/><circle cx="7.9" cy="5.4" r="2.1" fill="#a8a8a8" stroke="#d0d0d0" stroke-width="0.6"/><circle cx="22.1" cy="5.4" r="2.1" fill="#a8a8a8" stroke="#d0d0d0" stroke-width="0.6"/><rect x="0" y="9.3" width="30" height="1.2" fill="#1e1e1e"/></svg>
<div class="t" style="left:646.62px;top:138.09px;font-size:11.5px;color:#111;">4</div>
<svg style="position:absolute;left:660.625px;top:138.51999999999998px;" width="30" height="10.5" viewBox="0 0 30 10.5"><rect x="0" y="0" width="30" height="10.5" fill="#8d8d8d"/><rect x="1.6" y="1.6" width="12.6" height="7.6" fill="#101010"/><rect x="15.8" y="1.6" width="12.6" height="7.6" fill="#101010"/><rect x="2.8" y="1.8" width="10.2" height="7.2" fill="#1f3d95"/><rect x="17" y="1.8" width="10.2" height="7.2" fill="#1f3d95"/><rect x="14.2" y="1" width="1.6" height="8.5" fill="#dcdcdc"/><circle cx="7.9" cy="5.4" r="2.1" fill="#a8a8a8" stroke="#d0d0d0" stroke-width="0.6"/><circle cx="22.1" cy="5.4" r="2.1" fill="#a8a8a8" stroke="#d0d0d0" stroke-width="0.6"/><rect x="0" y="9.3" width="30" height="1.2" fill="#1e1e1e"/></svg>
<div class="t" style="left:646.62px;top:152.93px;font-size:11.5px;color:#111;">5</div>
<svg style="position:absolute;left:660.625px;top:153.36px;" width="30" height="10.5" viewBox="0 0 30 10.5"><rect x="0" y="0" width="30" height="10.5" fill="#8d8d8d"/><rect x="1.6" y="1.6" width="12.6" height="7.6" fill="#101010"/><rect x="15.8" y="1.6" width="12.6" height="7.6" fill="#101010"/><rect x="2.8" y="1.8" width="10.2" height="7.2" fill="#1f3d95"/><rect x="17" y="1.8" width="10.2" height="7.2" fill="#1f3d95"/><rect x="14.2" y="1" width="1.6" height="8.5" fill="#dcdcdc"/><circle cx="7.9" cy="5.4" r="2.1" fill="#a8a8a8" stroke="#d0d0d0" stroke-width="0.6"/><circle cx="22.1" cy="5.4" r="2.1" fill="#a8a8a8" stroke="#d0d0d0" stroke-width="0.6"/><rect x="0" y="9.3" width="30" height="1.2" fill="#1e1e1e"/></svg>
<div class="t" style="left:646.62px;top:167.77px;font-size:11.5px;color:#111;">6</div>
<svg style="position:absolute;left:660.625px;top:168.2px;" width="30" height="10.5" viewBox="0 0 30 10.5"><rect x="0" y="0" width="30" height="10.5" fill="#8d8d8d"/><rect x="1.6" y="1.6" width="12.6" height="7.6" fill="#101010"/><rect x="15.8" y="1.6" width="12.6" height="7.6" fill="#101010"/><rect x="2.8" y="1.8" width="10.2" height="7.2" fill="#1f3d95"/><rect x="17" y="1.8" width="10.2" height="7.2" fill="#1f3d95"/><rect x="14.2" y="1" width="1.6" height="8.5" fill="#dcdcdc"/><circle cx="7.9" cy="5.4" r="2.1" fill="#a8a8a8" stroke="#d0d0d0" stroke-width="0.6"/><circle cx="22.1" cy="5.4" r="2.1" fill="#a8a8a8" stroke="#d0d0d0" stroke-width="0.6"/><rect x="0" y="9.3" width="30" height="1.2" fill="#1e1e1e"/></svg>
<div style="left:534px;top:196.8px;width:8.5px;height:64.925px;background:#b9b9be;"></div>
<div style="left:1242px;top:196.8px;width:8.5px;height:64.925px;background:#b9b9be;"></div>
<div style="left:542.5px;top:259.225px;width:699.5px;height:2.5px;background:#b6b7bb;"></div>
<div style="left:542.5px;top:196.8px;width:699.5px;height:62.425px;background:#f4f6f8;"></div>
<div style="left:543.8px;top:197.0px;width:696.4px;height:11px;background:linear-gradient(#99c0ea,#8db2dc 55%,#8398b6 90%,#7b8596);"></div>
<div style="left:543.5px;top:207.8px;width:697px;height:49.925px;background:linear-gradient(170deg,#f1f3f6,#e7eaee);"></div>
<div class="t" style="left:546.80px;top:197.41px;font-size:9.2px;color:#eef4ff;transform:scaleX(0.9800);transform-origin:0 0;">Rangierpanel</div>
<div class="t" style="left:1220.40px;top:198.23px;font-size:8px;color:#dce8f6;">V</div>
<div class="t" style="left:1230.30px;top:198.23px;font-size:8px;color:#dce8f6;">H</div>
<div class="t" style="left:780.50px;top:220.13px;font-size:36px;color:#b9bcc0;transform:scaleX(1.0413);transform-origin:0 0;">Rangierpanel</div>
<div style="left:534px;top:262.725px;width:8.5px;height:64.925px;background:#9c9dbf;"></div>
<div style="left:1242px;top:262.725px;width:8.5px;height:64.925px;background:#9c9dbf;"></div>
<div style="left:542.5px;top:325.15000000000003px;width:699.5px;height:2.5px;background:#b6b7bb;"></div>
<div style="left:542.5px;top:262.725px;width:699.5px;height:62.425px;background:#f4f6f8;"></div>
<div style="left:543.8px;top:262.925px;width:696.4px;height:11px;background:linear-gradient(#99c0ea,#8db2dc 55%,#8398b6 90%,#7b8596);"></div>
<div style="left:543.5px;top:273.725px;width:697px;height:49.925px;background:linear-gradient(#d3d9f0,#bcc4e4);"></div>
<div class="t" style="left:546.80px;top:263.34px;font-size:9.2px;color:#eef4ff;transform:scaleX(0.9800);transform-origin:0 0;">SWBIO01</div>
<div class="t" style="left:1220.40px;top:264.15px;font-size:8px;color:#dce8f6;">V</div>
<div class="t" style="left:1230.30px;top:264.15px;font-size:8px;color:#dce8f6;">H</div>
<div style="left:533.5px;top:261.52500000000003px;width:718px;height:66px;border:1px dotted #333;"></div>
<div class="t" style="left:592.99px;top:277.27px;font-size:11.5px;color:#1e1e1e;transform:scaleX(0.9400);transform-origin:0 0;">1</div>
<svg style="position:absolute;left:590.50px;top:290.00px" width="11" height="10.5" viewBox="0 0 11 10.5"><use href="#pu" fill="#1f3e98"/></svg>
<svg style="position:absolute;left:590.50px;top:306.30px" width="11" height="10.5" viewBox="0 0 11 10.5"><use href="#pd" fill="#1f3e98"/></svg>
<div class="t" style="left:592.99px;top:315.77px;font-size:11.5px;color:#1e1e1e;transform:scaleX(0.9400);transform-origin:0 0;">2</div>
<div class="t" style="left:613.49px;top:277.27px;font-size:11.5px;color:#1e1e1e;transform:scaleX(0.9400);transform-origin:0 0;">3</div>
<svg style="position:absolute;left:611.00px;top:290.00px" width="11" height="10.5" viewBox="0 0 11 10.5"><use href="#pu" fill="#1f3e98"/></svg>
<svg style="position:absolute;left:611.00px;top:306.30px" width="11" height="10.5" viewBox="0 0 11 10.5"><use href="#pd" fill="#1f3e98"/></svg>
<div class="t" style="left:613.49px;top:315.77px;font-size:11.5px;color:#1e1e1e;transform:scaleX(0.9400);transform-origin:0 0;">4</div>
<div class="t" style="left:633.99px;top:277.27px;font-size:11.5px;color:#1e1e1e;transform:scaleX(0.9400);transform-origin:0 0;">5</div>
<svg style="position:absolute;left:631.50px;top:290.00px" width="11" height="10.5" viewBox="0 0 11 10.5"><use href="#pu" fill="#1f3e98"/></svg>
<svg style="position:absolute;left:631.50px;top:306.30px" width="11" height="10.5" viewBox="0 0 11 10.5"><use href="#pd" fill="#1f3e98"/></svg>
<div class="t" style="left:633.99px;top:315.77px;font-size:11.5px;color:#1e1e1e;transform:scaleX(0.9400);transform-origin:0 0;">6</div>
<div class="t" style="left:654.49px;top:277.27px;font-size:11.5px;color:#1e1e1e;transform:scaleX(0.9400);transform-origin:0 0;">7</div>
<svg style="position:absolute;left:652.00px;top:290.00px" width="11" height="10.5" viewBox="0 0 11 10.5"><use href="#pu" fill="#1f3e98"/></svg>
<svg style="position:absolute;left:652.00px;top:306.30px" width="11" height="10.5" viewBox="0 0 11 10.5"><use href="#pd" fill="#1f3e98"/></svg>
<div class="t" style="left:654.49px;top:315.77px;font-size:11.5px;color:#1e1e1e;transform:scaleX(0.9400);transform-origin:0 0;">8</div>
<div class="t" style="left:674.99px;top:277.27px;font-size:11.5px;color:#1e1e1e;transform:scaleX(0.9400);transform-origin:0 0;">9</div>
<svg style="position:absolute;left:672.50px;top:290.00px" width="11" height="10.5" viewBox="0 0 11 10.5"><use href="#pu" fill="#1f3e98"/></svg>
<svg style="position:absolute;left:672.50px;top:306.30px" width="11" height="10.5" viewBox="0 0 11 10.5"><use href="#pd" fill="#1f3e98"/></svg>
<div class="t" style="left:671.99px;top:315.77px;font-size:11.5px;color:#1e1e1e;transform:scaleX(0.9400);transform-origin:0 0;">10</div>
<div class="t" style="left:692.89px;top:277.27px;font-size:11.5px;color:#1e1e1e;transform:scaleX(0.9400);transform-origin:0 0;">11</div>
<svg style="position:absolute;left:693.00px;top:290.00px" width="11" height="10.5" viewBox="0 0 11 10.5"><use href="#pu" fill="#1f3e98"/></svg>
<svg style="position:absolute;left:693.00px;top:306.30px" width="11" height="10.5" viewBox="0 0 11 10.5"><use href="#pd" fill="#1f3e98"/></svg>
<div class="t" style="left:692.49px;top:315.77px;font-size:11.5px;color:#1e1e1e;transform:scaleX(0.9400);transform-origin:0 0;">12</div>
<div class="t" style="left:720.59px;top:277.27px;font-size:11.5px;color:#1e1e1e;transform:scaleX(0.9400);transform-origin:0 0;">13</div>
<svg style="position:absolute;left:721.10px;top:290.00px" width="11" height="10.5" viewBox="0 0 11 10.5"><use href="#pu" fill="#1f3e98"/></svg>
<svg style="position:absolute;left:721.10px;top:306.30px" width="11" height="10.5" viewBox="0 0 11 10.5"><use href="#pd" fill="#1f3e98"/></svg>
<div class="t" style="left:720.59px;top:315.77px;font-size:11.5px;color:#1e1e1e;transform:scaleX(0.9400);transform-origin:0 0;">14</div>
<div class="t" style="left:741.09px;top:277.27px;font-size:11.5px;color:#1e1e1e;transform:scaleX(0.9400);transform-origin:0 0;">15</div>
<svg style="position:absolute;left:741.60px;top:290.00px" width="11" height="10.5" viewBox="0 0 11 10.5"><use href="#pu" fill="#1f3e98"/></svg>
<svg style="position:absolute;left:741.60px;top:306.30px" width="11" height="10.5" viewBox="0 0 11 10.5"><use href="#pd" fill="#1f3e98"/></svg>
<div class="t" style="left:741.09px;top:315.77px;font-size:11.5px;color:#1e1e1e;transform:scaleX(0.9400);transform-origin:0 0;">16</div>
<div class="t" style="left:761.59px;top:277.27px;font-size:11.5px;color:#1e1e1e;transform:scaleX(0.9400);transform-origin:0 0;">17</div>
<svg style="position:absolute;left:762.10px;top:290.00px" width="11" height="10.5" viewBox="0 0 11 10.5"><use href="#pu" fill="#1f3e98"/></svg>
<svg style="position:absolute;left:762.10px;top:306.30px" width="11" height="10.5" viewBox="0 0 11 10.5"><use href="#pd" fill="#1f3e98"/></svg>
<div class="t" style="left:761.59px;top:315.77px;font-size:11.5px;color:#1e1e1e;transform:scaleX(0.9400);transform-origin:0 0;">18</div>
<div class="t" style="left:782.09px;top:277.27px;font-size:11.5px;color:#1e1e1e;transform:scaleX(0.9400);transform-origin:0 0;">19</div>
<svg style="position:absolute;left:782.60px;top:290.00px" width="11" height="10.5" viewBox="0 0 11 10.5"><use href="#pu" fill="#1f3e98"/></svg>
<svg style="position:absolute;left:782.60px;top:306.30px" width="11" height="10.5" viewBox="0 0 11 10.5"><use href="#pd" fill="#1f3e98"/></svg>
<div class="t" style="left:782.09px;top:315.77px;font-size:11.5px;color:#1e1e1e;transform:scaleX(0.9400);transform-origin:0 0;">20</div>
<div class="t" style="left:802.59px;top:277.27px;font-size:11.5px;color:#1e1e1e;transform:scaleX(0.9400);transform-origin:0 0;">21</div>
<svg style="position:absolute;left:803.10px;top:290.00px" width="11" height="10.5" viewBox="0 0 11 10.5"><use href="#pu" fill="#1f3e98"/></svg>
<svg style="position:absolute;left:803.10px;top:306.30px" width="11" height="10.5" viewBox="0 0 11 10.5"><use href="#pd" fill="#1f3e98"/></svg>
<div class="t" style="left:802.59px;top:315.77px;font-size:11.5px;color:#1e1e1e;transform:scaleX(0.9400);transform-origin:0 0;">22</div>
<div class="t" style="left:823.09px;top:277.27px;font-size:11.5px;color:#1e1e1e;transform:scaleX(0.9400);transform-origin:0 0;">23</div>
<svg style="position:absolute;left:823.60px;top:290.00px" width="11" height="10.5" viewBox="0 0 11 10.5"><use href="#pu" fill="#1f3e98"/></svg>
<svg style="position:absolute;left:823.60px;top:306.30px" width="11" height="10.5" viewBox="0 0 11 10.5"><use href="#pd" fill="#1f3e98"/></svg>
<div class="t" style="left:823.09px;top:315.77px;font-size:11.5px;color:#1e1e1e;transform:scaleX(0.9400);transform-origin:0 0;">24</div>
<div class="t" style="left:851.19px;top:277.27px;font-size:11.5px;color:#1e1e1e;transform:scaleX(0.9400);transform-origin:0 0;">25</div>
<svg style="position:absolute;left:851.70px;top:290.00px" width="11" height="10.5" viewBox="0 0 11 10.5"><use href="#pu" fill="#1f3e98"/></svg>
<svg style="position:absolute;left:851.70px;top:306.30px" width="11" height="10.5" viewBox="0 0 11 10.5"><use href="#pd" fill="#1f3e98"/></svg>
<div class="t" style="left:851.19px;top:315.77px;font-size:11.5px;color:#1e1e1e;transform:scaleX(0.9400);transform-origin:0 0;">26</div>
<div class="t" style="left:871.69px;top:277.27px;font-size:11.5px;color:#1e1e1e;transform:scaleX(0.9400);transform-origin:0 0;">27</div>
<svg style="position:absolute;left:872.20px;top:290.00px" width="11" height="10.5" viewBox="0 0 11 10.5"><use href="#pu" fill="#1f3e98"/></svg>
<svg style="position:absolute;left:872.20px;top:306.30px" width="11" height="10.5" viewBox="0 0 11 10.5"><use href="#pd" fill="#1f3e98"/></svg>
<div class="t" style="left:871.69px;top:315.77px;font-size:11.5px;color:#1e1e1e;transform:scaleX(0.9400);transform-origin:0 0;">28</div>
<div class="t" style="left:892.19px;top:277.27px;font-size:11.5px;color:#1e1e1e;transform:scaleX(0.9400);transform-origin:0 0;">29</div>
<svg style="position:absolute;left:892.70px;top:290.00px" width="11" height="10.5" viewBox="0 0 11 10.5"><use href="#pu" fill="#1f3e98"/></svg>
<svg style="position:absolute;left:892.70px;top:306.30px" width="11" height="10.5" viewBox="0 0 11 10.5"><use href="#pd" fill="#1f3e98"/></svg>
<div class="t" style="left:892.19px;top:315.77px;font-size:11.5px;color:#1e1e1e;transform:scaleX(0.9400);transform-origin:0 0;">30</div>
<div class="t" style="left:912.69px;top:277.27px;font-size:11.5px;color:#1e1e1e;transform:scaleX(0.9400);transform-origin:0 0;">31</div>
<svg style="position:absolute;left:913.20px;top:290.00px" width="11" height="10.5" viewBox="0 0 11 10.5"><use href="#pu" fill="#1f3e98"/></svg>
<svg style="position:absolute;left:913.20px;top:306.30px" width="11" height="10.5" viewBox="0 0 11 10.5"><use href="#pd" fill="#1f3e98"/></svg>
<div class="t" style="left:912.69px;top:315.77px;font-size:11.5px;color:#1e1e1e;transform:scaleX(0.9400);transform-origin:0 0;">32</div>
<div class="t" style="left:933.19px;top:277.27px;font-size:11.5px;color:#1e1e1e;transform:scaleX(0.9400);transform-origin:0 0;">33</div>
<svg style="position:absolute;left:933.70px;top:290.00px" width="11" height="10.5" viewBox="0 0 11 10.5"><use href="#pu" fill="#1f3e98"/></svg>
<svg style="position:absolute;left:933.70px;top:306.30px" width="11" height="10.5" viewBox="0 0 11 10.5"><use href="#pd" fill="#1f3e98"/></svg>
<div class="t" style="left:933.19px;top:315.77px;font-size:11.5px;color:#1e1e1e;transform:scaleX(0.9400);transform-origin:0 0;">34</div>
<div class="t" style="left:953.69px;top:277.27px;font-size:11.5px;color:#1e1e1e;transform:scaleX(0.9400);transform-origin:0 0;">35</div>
<svg style="position:absolute;left:954.20px;top:290.00px" width="11" height="10.5" viewBox="0 0 11 10.5"><use href="#pu" fill="#1f3e98"/></svg>
<svg style="position:absolute;left:954.20px;top:306.30px" width="11" height="10.5" viewBox="0 0 11 10.5"><use href="#pd" fill="#1f3e98"/></svg>
<div class="t" style="left:953.69px;top:315.77px;font-size:11.5px;color:#1e1e1e;transform:scaleX(0.9400);transform-origin:0 0;">36</div>
<div class="t" style="left:981.79px;top:277.27px;font-size:11.5px;color:#1e1e1e;transform:scaleX(0.9400);transform-origin:0 0;">37</div>
<svg style="position:absolute;left:982.30px;top:290.00px" width="11" height="10.5" viewBox="0 0 11 10.5"><use href="#pu" fill="#1f3e98"/></svg>
<svg style="position:absolute;left:982.30px;top:306.30px" width="11" height="10.5" viewBox="0 0 11 10.5"><use href="#pd" fill="#1f3e98"/></svg>
<div class="t" style="left:981.79px;top:315.77px;font-size:11.5px;color:#1e1e1e;transform:scaleX(0.9400);transform-origin:0 0;">38</div>
<div class="t" style="left:1002.29px;top:277.27px;font-size:11.5px;color:#1e1e1e;transform:scaleX(0.9400);transform-origin:0 0;">39</div>
<svg style="position:absolute;left:1002.80px;top:290.00px" width="11" height="10.5" viewBox="0 0 11 10.5"><use href="#pu" fill="#1f3e98"/></svg>
<svg style="position:absolute;left:1002.80px;top:306.30px" width="11" height="10.5" viewBox="0 0 11 10.5"><use href="#pd" fill="#1f3e98"/></svg>
<div class="t" style="left:1002.29px;top:315.77px;font-size:11.5px;color:#1e1e1e;transform:scaleX(0.9400);transform-origin:0 0;">40</div>
<div class="t" style="left:1022.79px;top:277.27px;font-size:11.5px;color:#1e1e1e;transform:scaleX(0.9400);transform-origin:0 0;">41</div>
<svg style="position:absolute;left:1023.30px;top:290.00px" width="11" height="10.5" viewBox="0 0 11 10.5"><use href="#pu" fill="#1f3e98"/></svg>
<svg style="position:absolute;left:1023.30px;top:306.30px" width="11" height="10.5" viewBox="0 0 11 10.5"><use href="#pd" fill="#1f3e98"/></svg>
<div class="t" style="left:1022.79px;top:315.77px;font-size:11.5px;color:#1e1e1e;transform:scaleX(0.9400);transform-origin:0 0;">42</div>
<div class="t" style="left:1043.29px;top:277.27px;font-size:11.5px;color:#1e1e1e;transform:scaleX(0.9400);transform-origin:0 0;">43</div>
<svg style="position:absolute;left:1043.80px;top:290.00px" width="11" height="10.5" viewBox="0 0 11 10.5"><use href="#pu" fill="#1f3e98"/></svg>
<svg style="position:absolute;left:1043.80px;top:306.30px" width="11" height="10.5" viewBox="0 0 11 10.5"><use href="#pd" fill="#1f3e98"/></svg>
<div class="t" style="left:1043.29px;top:315.77px;font-size:11.5px;color:#1e1e1e;transform:scaleX(0.9400);transform-origin:0 0;">44</div>
<div class="t" style="left:1063.79px;top:277.27px;font-size:11.5px;color:#1e1e1e;transform:scaleX(0.9400);transform-origin:0 0;">45</div>
<svg style="position:absolute;left:1064.30px;top:290.00px" width="11" height="10.5" viewBox="0 0 11 10.5"><use href="#pu" fill="#1f3e98"/></svg>
<svg style="position:absolute;left:1064.30px;top:306.30px" width="11" height="10.5" viewBox="0 0 11 10.5"><use href="#pd" fill="#1f3e98"/></svg>
<div class="t" style="left:1063.79px;top:315.77px;font-size:11.5px;color:#1e1e1e;transform:scaleX(0.9400);transform-origin:0 0;">46</div>
<div class="t" style="left:1084.29px;top:277.27px;font-size:11.5px;color:#1e1e1e;transform:scaleX(0.9400);transform-origin:0 0;">47</div>
<svg style="position:absolute;left:1084.80px;top:290.00px" width="11" height="10.5" viewBox="0 0 11 10.5"><use href="#pu" fill="#1f3e98"/></svg>
<svg style="position:absolute;left:1084.80px;top:306.30px" width="11" height="10.5" viewBox="0 0 11 10.5"><use href="#pd" fill="#1f3e98"/></svg>
<div class="t" style="left:1084.29px;top:315.77px;font-size:11.5px;color:#1e1e1e;transform:scaleX(0.9400);transform-origin:0 0;">48</div>
<svg style="position:absolute;left:752.5px;top:279.5px;" width="5" height="4" viewBox="0 0 5 4"><path d="M2.5 0 L5 4 H0 Z" fill="#1a9a1a"/></svg>
<div class="t" style="left:1110.00px;top:274.57px;font-size:11.5px;color:#111;transform:scaleX(0.9462);transform-origin:0 0;">Console 1</div>
<div class="t" style="left:1168.50px;top:274.57px;font-size:11.5px;color:#111;transform:scaleX(0.8514);transform-origin:0 0;">USB 1</div>
<div style="left:1176.8px;top:287.5px;width:14.6px;height:7px;background:#24408f;border:1px solid #112;border-radius:1.5px;"></div>
<div style="left:1133px;top:288px;width:4px;height:1.5px;background:#777;"></div>
<div class="t" style="left:1120.99px;top:293.87px;font-size:11.5px;color:#1e1e1e;transform:scaleX(0.9400);transform-origin:0 0;">49</div>
<div class="t" style="left:1141.99px;top:293.87px;font-size:11.5px;color:#1e1e1e;transform:scaleX(0.9400);transform-origin:0 0;">50</div>
<div style="left:1116.4px;top:304px;width:19.5px;height:12.4px;background:#e6e6ea;border:1px solid #c9c9d2;"></div>
<svg style="position:absolute;left:1119.4px;top:305px;" width="14" height="11" viewBox="0 0 14 11"><circle cx="4" cy="3" r="2.2" fill="#1d8f1d"/><circle cx="10" cy="3" r="2.2" fill="#1d8f1d"/><rect x="1" y="5" width="5.5" height="5.5" fill="#888" stroke="#333" stroke-width="0.8"/><rect x="7.5" y="5" width="5.5" height="5.5" fill="#888" stroke="#333" stroke-width="0.8"/></svg>
<div style="left:1135.95px;top:304px;width:19.5px;height:12.4px;background:#e6e6ea;border:1px solid #c9c9d2;"></div>
<svg style="position:absolute;left:1138.95px;top:305px;" width="14" height="11" viewBox="0 0 14 11"><circle cx="4" cy="3" r="2.2" fill="#1d8f1d"/><circle cx="10" cy="3" r="2.2" fill="#1d8f1d"/><rect x="1" y="5" width="5.5" height="5.5" fill="#888" stroke="#333" stroke-width="0.8"/><rect x="7.5" y="5" width="5.5" height="5.5" fill="#888" stroke="#333" stroke-width="0.8"/></svg>
<div style="left:1155.5px;top:304px;width:19.5px;height:12.4px;background:#e6e6ea;border:1px solid #c9c9d2;"></div>
<div style="left:1175.0500000000002px;top:304px;width:19.5px;height:12.4px;background:#e6e6ea;border:1px solid #c9c9d2;"></div>
<div style="left:534px;top:328.65px;width:8.5px;height:130.85px;background:#b9b9be;"></div>
<div style="left:1242px;top:328.65px;width:8.5px;height:130.85px;background:#b9b9be;"></div>
<div style="left:542.5px;top:457.0px;width:699.5px;height:2.5px;background:#b6b7bb;"></div>
<div style="left:542.5px;top:328.65px;width:699.5px;height:128.35px;background:#f4f6f8;"></div>
<div style="left:543.8px;top:328.84999999999997px;width:696.4px;height:16px;background:linear-gradient(#99c0ea,#8db2dc 55%,#8398b6 90%,#7b8596);"></div>
<div style="left:543.5px;top:344.65px;width:697px;height:110.85px;background:linear-gradient(170deg,#f1f3f6,#e7eaee);"></div>
<div class="t" style="left:546.80px;top:330.89px;font-size:12px;color:#eef4ff;transform:scaleX(1.0300);transform-origin:0 0;">Rangierpanel</div>
<div class="t" style="left:1211.40px;top:332.34px;font-size:11px;color:#eaf1fa;">V</div>
<div class="t" style="left:1226.00px;top:332.34px;font-size:11px;color:#eaf1fa;">H</div>
<div class="t" style="left:708.00px;top:370.93px;font-size:67px;color:#b9bcc0;transform:scaleX(0.9233);transform-origin:0 0;">Rangierpanel</div>
<div style="left:534px;top:460.5px;width:8.5px;height:64.925px;background:#b9b9be;"></div>
<div style="left:1242px;top:460.5px;width:8.5px;height:64.925px;background:#b9b9be;"></div>
<div style="left:542.5px;top:522.925px;width:699.5px;height:2.5px;background:#b6b7bb;"></div>
<div style="left:542.5px;top:460.5px;width:699.5px;height:62.425px;background:#f4f6f8;"></div>
<div style="left:543.8px;top:460.7px;width:696.4px;height:11px;background:linear-gradient(#99c0ea,#8db2dc 55%,#8398b6 90%,#7b8596);"></div>
<div style="left:543.5px;top:471.5px;width:697px;height:49.925px;background:linear-gradient(170deg,#f1f3f6,#e7eaee);"></div>
<div class="t" style="left:546.80px;top:461.11px;font-size:9.2px;color:#eef4ff;transform:scaleX(0.9800);transform-origin:0 0;">PFC-33</div>
<div class="t" style="left:1220.40px;top:461.93px;font-size:8px;color:#dce8f6;">V</div>
<div class="t" style="left:1230.30px;top:461.93px;font-size:8px;color:#dce8f6;">H</div>
<div class="t" style="left:564.99px;top:484.17px;font-size:11.5px;color:#1e1e1e;transform:scaleX(0.9400);transform-origin:0 0;">1</div>
<svg style="position:absolute;left:562.50px;top:496.80px" width="11" height="10.5" viewBox="0 0 11 10.5"><use href="#pd" fill="#148f14"/></svg>
<div class="t" style="left:592.69px;top:484.17px;font-size:11.5px;color:#1e1e1e;transform:scaleX(0.9400);transform-origin:0 0;">2</div>
<svg style="position:absolute;left:590.20px;top:496.80px" width="11" height="10.5" viewBox="0 0 11 10.5"><use href="#pd" fill="#1f3e98"/></svg>
<div class="t" style="left:620.39px;top:484.17px;font-size:11.5px;color:#1e1e1e;transform:scaleX(0.9400);transform-origin:0 0;">3</div>
<svg style="position:absolute;left:617.90px;top:496.80px" width="11" height="10.5" viewBox="0 0 11 10.5"><use href="#pd" fill="#148f14"/></svg>
<div class="t" style="left:648.09px;top:484.17px;font-size:11.5px;color:#1e1e1e;transform:scaleX(0.9400);transform-origin:0 0;">4</div>
<svg style="position:absolute;left:645.60px;top:496.80px" width="11" height="10.5" viewBox="0 0 11 10.5"><use href="#pd" fill="#1f3e98"/></svg>
<div class="t" style="left:675.79px;top:484.17px;font-size:11.5px;color:#1e1e1e;transform:scaleX(0.9400);transform-origin:0 0;">5</div>
<svg style="position:absolute;left:673.30px;top:496.80px" width="11" height="10.5" viewBox="0 0 11 10.5"><use href="#pd" fill="#148f14"/></svg>
<div class="t" style="left:703.49px;top:484.17px;font-size:11.5px;color:#1e1e1e;transform:scaleX(0.9400);transform-origin:0 0;">6</div>
<svg style="position:absolute;left:701.00px;top:496.80px" width="11" height="10.5" viewBox="0 0 11 10.5"><use href="#pd" fill="#1f3e98"/></svg>
<div class="t" style="left:731.19px;top:484.17px;font-size:11.5px;color:#1e1e1e;transform:scaleX(0.9400);transform-origin:0 0;">7</div>
<svg style="position:absolute;left:728.70px;top:496.80px" width="11" height="10.5" viewBox="0 0 11 10.5"><use href="#pd" fill="#148f14"/></svg>
<div class="t" style="left:758.89px;top:484.17px;font-size:11.5px;color:#1e1e1e;transform:scaleX(0.9400);transform-origin:0 0;">8</div>
<svg style="position:absolute;left:756.40px;top:496.80px" width="11" height="10.5" viewBox="0 0 11 10.5"><use href="#pd" fill="#1f3e98"/></svg>
<div class="t" style="left:786.59px;top:484.17px;font-size:11.5px;color:#1e1e1e;transform:scaleX(0.9400);transform-origin:0 0;">9</div>
<svg style="position:absolute;left:784.10px;top:496.80px" width="11" height="10.5" viewBox="0 0 11 10.5"><use href="#pd" fill="#148f14"/></svg>
<div class="t" style="left:811.29px;top:484.17px;font-size:11.5px;color:#1e1e1e;transform:scaleX(0.9400);transform-origin:0 0;">10</div>
<svg style="position:absolute;left:811.80px;top:496.80px" width="11" height="10.5" viewBox="0 0 11 10.5"><use href="#pd" fill="#1f3e98"/></svg>
<div class="t" style="left:839.39px;top:484.17px;font-size:11.5px;color:#1e1e1e;transform:scaleX(0.9400);transform-origin:0 0;">11</div>
<svg style="position:absolute;left:839.50px;top:496.80px" width="11" height="10.5" viewBox="0 0 11 10.5"><use href="#pd" fill="#148f14"/></svg>
<div class="t" style="left:866.69px;top:484.17px;font-size:11.5px;color:#1e1e1e;transform:scaleX(0.9400);transform-origin:0 0;">12</div>
<svg style="position:absolute;left:867.20px;top:496.80px" width="11" height="10.5" viewBox="0 0 11 10.5"><use href="#pd" fill="#1f3e98"/></svg>
<div class="t" style="left:894.39px;top:484.17px;font-size:11.5px;color:#1e1e1e;transform:scaleX(0.9400);transform-origin:0 0;">13</div>
<svg style="position:absolute;left:894.90px;top:496.80px" width="11" height="10.5" viewBox="0 0 11 10.5"><use href="#pd" fill="#148f14"/></svg>
<div class="t" style="left:922.09px;top:484.17px;font-size:11.5px;color:#1e1e1e;transform:scaleX(0.9400);transform-origin:0 0;">14</div>
<svg style="position:absolute;left:922.60px;top:496.80px" width="11" height="10.5" viewBox="0 0 11 10.5"><use href="#pd" fill="#1f3e98"/></svg>
<div class="t" style="left:949.79px;top:484.17px;font-size:11.5px;color:#1e1e1e;transform:scaleX(0.9400);transform-origin:0 0;">15</div>
<svg style="position:absolute;left:950.30px;top:496.80px" width="11" height="10.5" viewBox="0 0 11 10.5"><use href="#pd" fill="#148f14"/></svg>
<div class="t" style="left:977.49px;top:484.17px;font-size:11.5px;color:#1e1e1e;transform:scaleX(0.9400);transform-origin:0 0;">16</div>
<svg style="position:absolute;left:978.00px;top:496.80px" width="11" height="10.5" viewBox="0 0 11 10.5"><use href="#pd" fill="#1f3e98"/></svg>
<div class="t" style="left:1005.19px;top:484.17px;font-size:11.5px;color:#1e1e1e;transform:scaleX(0.9400);transform-origin:0 0;">17</div>
<svg style="position:absolute;left:1005.70px;top:496.80px" width="11" height="10.5" viewBox="0 0 11 10.5"><use href="#pd" fill="#148f14"/></svg>
<div class="t" style="left:1032.89px;top:484.17px;font-size:11.5px;color:#1e1e1e;transform:scaleX(0.9400);transform-origin:0 0;">18</div>
<svg style="position:absolute;left:1033.40px;top:496.80px" width="11" height="10.5" viewBox="0 0 11 10.5"><use href="#pd" fill="#1f3e98"/></svg>
<div class="t" style="left:1060.59px;top:484.17px;font-size:11.5px;color:#1e1e1e;transform:scaleX(0.9400);transform-origin:0 0;">19</div>
<svg style="position:absolute;left:1061.10px;top:496.80px" width="11" height="10.5" viewBox="0 0 11 10.5"><use href="#pd" fill="#148f14"/></svg>
<div class="t" style="left:1088.29px;top:484.17px;font-size:11.5px;color:#1e1e1e;transform:scaleX(0.9400);transform-origin:0 0;">20</div>
<svg style="position:absolute;left:1088.80px;top:496.80px" width="11" height="10.5" viewBox="0 0 11 10.5"><use href="#pd" fill="#1f3e98"/></svg>
<div class="t" style="left:1115.99px;top:484.17px;font-size:11.5px;color:#1e1e1e;transform:scaleX(0.9400);transform-origin:0 0;">21</div>
<svg style="position:absolute;left:1116.50px;top:496.80px" width="11" height="10.5" viewBox="0 0 11 10.5"><use href="#pd" fill="#148f14"/></svg>
<div class="t" style="left:1143.69px;top:484.17px;font-size:11.5px;color:#1e1e1e;transform:scaleX(0.9400);transform-origin:0 0;">22</div>
<svg style="position:absolute;left:1144.20px;top:496.80px" width="11" height="10.5" viewBox="0 0 11 10.5"><use href="#pd" fill="#1f3e98"/></svg>
<div class="t" style="left:1171.39px;top:484.17px;font-size:11.5px;color:#1e1e1e;transform:scaleX(0.9400);transform-origin:0 0;">23</div>
<svg style="position:absolute;left:1171.90px;top:496.80px" width="11" height="10.5" viewBox="0 0 11 10.5"><use href="#pd" fill="#148f14"/></svg>
<div class="t" style="left:1199.09px;top:484.17px;font-size:11.5px;color:#1e1e1e;transform:scaleX(0.9400);transform-origin:0 0;">24</div>
<svg style="position:absolute;left:1199.60px;top:496.80px" width="11" height="10.5" viewBox="0 0 11 10.5"><use href="#pd" fill="#1f3e98"/></svg>
<div style="left:534px;top:526.425px;width:8.5px;height:64.925px;background:#b9b9be;"></div>
<div style="left:1242px;top:526.425px;width:8.5px;height:64.925px;background:#b9b9be;"></div>
<div style="left:542.5px;top:588.8499999999999px;width:699.5px;height:2.5px;background:#b6b7bb;"></div>
<div style="left:542.5px;top:526.425px;width:699.5px;height:62.425px;background:#f4f6f8;"></div>
<div style="left:543.8px;top:526.625px;width:696.4px;height:11px;background:linear-gradient(#99c0ea,#8db2dc 55%,#8398b6 90%,#7b8596);"></div>
<div style="left:543.5px;top:537.425px;width:697px;height:49.925px;background:linear-gradient(170deg,#f1f3f6,#e7eaee);"></div>
<div class="t" style="left:546.80px;top:527.04px;font-size:9.2px;color:#eef4ff;transform:scaleX(0.9800);transform-origin:0 0;">PFC-32</div>
<div class="t" style="left:1220.40px;top:527.85px;font-size:8px;color:#dce8f6;">V</div>
<div class="t" style="left:1230.30px;top:527.85px;font-size:8px;color:#dce8f6;">H</div>
<div class="t" style="left:564.99px;top:550.09px;font-size:11.5px;color:#1e1e1e;transform:scaleX(0.9400);transform-origin:0 0;">1</div>
<svg style="position:absolute;left:562.50px;top:562.72px" width="11" height="10.5" viewBox="0 0 11 10.5"><use href="#pd" fill="#148f14"/></svg>
<div class="t" style="left:592.69px;top:550.09px;font-size:11.5px;color:#1e1e1e;transform:scaleX(0.9400);transform-origin:0 0;">2</div>
<svg style="position:absolute;left:590.20px;top:562.72px" width="11" height="10.5" viewBox="0 0 11 10.5"><use href="#pd" fill="#484848"/></svg>
<div class="t" style="left:620.39px;top:550.09px;font-size:11.5px;color:#1e1e1e;transform:scaleX(0.9400);transform-origin:0 0;">3</div>
<svg style="position:absolute;left:617.90px;top:562.72px" width="11" height="10.5" viewBox="0 0 11 10.5"><use href="#pd" fill="#484848"/></svg>
<div class="t" style="left:648.09px;top:550.09px;font-size:11.5px;color:#1e1e1e;transform:scaleX(0.9400);transform-origin:0 0;">4</div>
<svg style="position:absolute;left:645.60px;top:562.72px" width="11" height="10.5" viewBox="0 0 11 10.5"><use href="#pd" fill="#484848"/></svg>
<div class="t" style="left:675.79px;top:550.09px;font-size:11.5px;color:#1e1e1e;transform:scaleX(0.9400);transform-origin:0 0;">5</div>
<svg style="position:absolute;left:673.30px;top:562.72px" width="11" height="10.5" viewBox="0 0 11 10.5"><use href="#pd" fill="#484848"/></svg>
<div class="t" style="left:703.49px;top:550.09px;font-size:11.5px;color:#1e1e1e;transform:scaleX(0.9400);transform-origin:0 0;">6</div>
<svg style="position:absolute;left:701.00px;top:562.72px" width="11" height="10.5" viewBox="0 0 11 10.5"><use href="#pd" fill="#484848"/></svg>
<div class="t" style="left:731.19px;top:550.09px;font-size:11.5px;color:#1e1e1e;transform:scaleX(0.9400);transform-origin:0 0;">7</div>
<svg style="position:absolute;left:728.70px;top:562.72px" width="11" height="10.5" viewBox="0 0 11 10.5"><use href="#pd" fill="#484848"/></svg>
<div class="t" style="left:758.89px;top:550.09px;font-size:11.5px;color:#1e1e1e;transform:scaleX(0.9400);transform-origin:0 0;">8</div>
<svg style="position:absolute;left:756.40px;top:562.72px" width="11" height="10.5" viewBox="0 0 11 10.5"><use href="#pd" fill="#484848"/></svg>
<div class="t" style="left:786.59px;top:550.09px;font-size:11.5px;color:#1e1e1e;transform:scaleX(0.9400);transform-origin:0 0;">9</div>
<svg style="position:absolute;left:784.10px;top:562.72px" width="11" height="10.5" viewBox="0 0 11 10.5"><use href="#pd" fill="#484848"/></svg>
<div class="t" style="left:811.29px;top:550.09px;font-size:11.5px;color:#1e1e1e;transform:scaleX(0.9400);transform-origin:0 0;">10</div>
<svg style="position:absolute;left:811.80px;top:562.72px" width="11" height="10.5" viewBox="0 0 11 10.5"><use href="#pd" fill="#484848"/></svg>
<div class="t" style="left:839.39px;top:550.09px;font-size:11.5px;color:#1e1e1e;transform:scaleX(0.9400);transform-origin:0 0;">11</div>
<svg style="position:absolute;left:839.50px;top:562.72px" width="11" height="10.5" viewBox="0 0 11 10.5"><use href="#pd" fill="#484848"/></svg>
<div class="t" style="left:866.69px;top:550.09px;font-size:11.5px;color:#1e1e1e;transform:scaleX(0.9400);transform-origin:0 0;">12</div>
<svg style="position:absolute;left:867.20px;top:562.72px" width="11" height="10.5" viewBox="0 0 11 10.5"><use href="#pd" fill="#484848"/></svg>
<div class="t" style="left:894.39px;top:550.09px;font-size:11.5px;color:#1e1e1e;transform:scaleX(0.9400);transform-origin:0 0;">13</div>
<svg style="position:absolute;left:894.90px;top:562.72px" width="11" height="10.5" viewBox="0 0 11 10.5"><use href="#pd" fill="#484848"/></svg>
<div class="t" style="left:922.09px;top:550.09px;font-size:11.5px;color:#1e1e1e;transform:scaleX(0.9400);transform-origin:0 0;">14</div>
<svg style="position:absolute;left:922.60px;top:562.72px" width="11" height="10.5" viewBox="0 0 11 10.5"><use href="#pd" fill="#484848"/></svg>
<div class="t" style="left:949.79px;top:550.09px;font-size:11.5px;color:#1e1e1e;transform:scaleX(0.9400);transform-origin:0 0;">15</div>
<svg style="position:absolute;left:950.30px;top:562.72px" width="11" height="10.5" viewBox="0 0 11 10.5"><use href="#pd" fill="#484848"/></svg>
<div class="t" style="left:977.49px;top:550.09px;font-size:11.5px;color:#1e1e1e;transform:scaleX(0.9400);transform-origin:0 0;">16</div>
<svg style="position:absolute;left:978.00px;top:562.72px" width="11" height="10.5" viewBox="0 0 11 10.5"><use href="#pd" fill="#484848"/></svg>
<div class="t" style="left:1005.19px;top:550.09px;font-size:11.5px;color:#1e1e1e;transform:scaleX(0.9400);transform-origin:0 0;">17</div>
<svg style="position:absolute;left:1005.70px;top:562.72px" width="11" height="10.5" viewBox="0 0 11 10.5"><use href="#pd" fill="#484848"/></svg>
<div class="t" style="left:1032.89px;top:550.09px;font-size:11.5px;color:#1e1e1e;transform:scaleX(0.9400);transform-origin:0 0;">18</div>
<svg style="position:absolute;left:1033.40px;top:562.72px" width="11" height="10.5" viewBox="0 0 11 10.5"><use href="#pd" fill="#484848"/></svg>
<div class="t" style="left:1060.59px;top:550.09px;font-size:11.5px;color:#1e1e1e;transform:scaleX(0.9400);transform-origin:0 0;">19</div>
<svg style="position:absolute;left:1061.10px;top:562.72px" width="11" height="10.5" viewBox="0 0 11 10.5"><use href="#pd" fill="#484848"/></svg>
<div class="t" style="left:1088.29px;top:550.09px;font-size:11.5px;color:#1e1e1e;transform:scaleX(0.9400);transform-origin:0 0;">20</div>
<svg style="position:absolute;left:1088.80px;top:562.72px" width="11" height="10.5" viewBox="0 0 11 10.5"><use href="#pd" fill="#484848"/></svg>
<div class="t" style="left:1115.99px;top:550.09px;font-size:11.5px;color:#1e1e1e;transform:scaleX(0.9400);transform-origin:0 0;">21</div>
<svg style="position:absolute;left:1116.50px;top:562.72px" width="11" height="10.5" viewBox="0 0 11 10.5"><use href="#pd" fill="#484848"/></svg>
<div class="t" style="left:1143.69px;top:550.09px;font-size:11.5px;color:#1e1e1e;transform:scaleX(0.9400);transform-origin:0 0;">22</div>
<svg style="position:absolute;left:1144.20px;top:562.72px" width="11" height="10.5" viewBox="0 0 11 10.5"><use href="#pd" fill="#484848"/></svg>
<div class="t" style="left:1171.39px;top:550.09px;font-size:11.5px;color:#1e1e1e;transform:scaleX(0.9400);transform-origin:0 0;">23</div>
<svg style="position:absolute;left:1171.90px;top:562.72px" width="11" height="10.5" viewBox="0 0 11 10.5"><use href="#pd" fill="#484848"/></svg>
<div class="t" style="left:1199.09px;top:550.09px;font-size:11.5px;color:#1e1e1e;transform:scaleX(0.9400);transform-origin:0 0;">24</div>
<svg style="position:absolute;left:1199.60px;top:562.72px" width="11" height="10.5" viewBox="0 0 11 10.5"><use href="#pd" fill="#484848"/></svg>
<div style="left:534px;top:592.3499999999999px;width:8.5px;height:64.925px;background:#b9b9be;"></div>
<div style="left:1242px;top:592.3499999999999px;width:8.5px;height:64.925px;background:#b9b9be;"></div>
<div style="left:542.5px;top:654.7749999999999px;width:699.5px;height:2.5px;background:#b6b7bb;"></div>
<div style="left:542.5px;top:592.3499999999999px;width:699.5px;height:62.425px;background:#f4f6f8;"></div>
<div style="left:543.8px;top:592.55px;width:696.4px;height:11px;background:linear-gradient(#99c0ea,#8db2dc 55%,#8398b6 90%,#7b8596);"></div>
<div style="left:543.5px;top:603.3499999999999px;width:697px;height:49.925px;background:linear-gradient(170deg,#f1f3f6,#e7eaee);"></div>
<div class="t" style="left:546.80px;top:592.96px;font-size:9.2px;color:#eef4ff;transform:scaleX(0.9800);transform-origin:0 0;">Blindpanel</div>
<div class="t" style="left:1220.40px;top:593.78px;font-size:8px;color:#dce8f6;">V</div>
<div class="t" style="left:1230.30px;top:593.78px;font-size:8px;color:#dce8f6;">H</div>
<div class="t" style="left:803.00px;top:612.88px;font-size:38px;color:#b9bcc0;transform:scaleX(1.0029);transform-origin:0 0;">Blindpanel</div>
<div style="left:534px;top:658.275px;width:8.5px;height:64.925px;background:#b9b9be;"></div>
<div style="left:1242px;top:658.275px;width:8.5px;height:64.925px;background:#b9b9be;"></div>
<div style="left:542.5px;top:720.6999999999999px;width:699.5px;height:2.5px;background:#b6b7bb;"></div>
<div style="left:542.5px;top:658.275px;width:699.5px;height:62.425px;background:#f4f6f8;"></div>
<div style="left:543.8px;top:658.475px;width:696.4px;height:11px;background:linear-gradient(#99c0ea,#8db2dc 55%,#8398b6 90%,#7b8596);"></div>
<div style="left:543.5px;top:669.275px;width:697px;height:49.925px;background:linear-gradient(170deg,#d5e3d2,#c3d8bf 50%,#b6cfb2);"></div>
<div class="t" style="left:546.80px;top:658.89px;font-size:9.2px;color:#eef4ff;transform:scaleX(0.9800);transform-origin:0 0;">PFC-30</div>
<div class="t" style="left:1220.40px;top:659.70px;font-size:8px;color:#dce8f6;">V</div>
<div class="t" style="left:1230.30px;top:659.70px;font-size:8px;color:#dce8f6;">H</div>
<div class="t" style="left:611.79px;top:685.34px;font-size:11.5px;color:#1e1e1e;transform:scaleX(0.9400);transform-origin:0 0;">1</div>
<svg style="position:absolute;left:609.30px;top:697.27px" width="11" height="10.5" viewBox="0 0 11 10.5"><use href="#pd" fill="#148f14"/></svg>
<div class="t" style="left:634.57px;top:685.34px;font-size:11.5px;color:#1e1e1e;transform:scaleX(0.9400);transform-origin:0 0;">2</div>
<svg style="position:absolute;left:632.08px;top:697.27px" width="11" height="10.5" viewBox="0 0 11 10.5"><use href="#pd" fill="#1f3e98"/></svg>
<div class="t" style="left:657.35px;top:685.34px;font-size:11.5px;color:#1e1e1e;transform:scaleX(0.9400);transform-origin:0 0;">3</div>
<svg style="position:absolute;left:654.86px;top:697.27px" width="11" height="10.5" viewBox="0 0 11 10.5"><use href="#pd" fill="#148f14"/></svg>
<div class="t" style="left:680.13px;top:685.34px;font-size:11.5px;color:#1e1e1e;transform:scaleX(0.9400);transform-origin:0 0;">4</div>
<svg style="position:absolute;left:677.64px;top:697.27px" width="11" height="10.5" viewBox="0 0 11 10.5"><use href="#pd" fill="#1f3e98"/></svg>
<div class="t" style="left:702.91px;top:685.34px;font-size:11.5px;color:#1e1e1e;transform:scaleX(0.9400);transform-origin:0 0;">5</div>
<svg style="position:absolute;left:700.42px;top:697.27px" width="11" height="10.5" viewBox="0 0 11 10.5"><use href="#pd" fill="#148f14"/></svg>
<div class="t" style="left:725.69px;top:685.34px;font-size:11.5px;color:#1e1e1e;transform:scaleX(0.9400);transform-origin:0 0;">6</div>
<svg style="position:absolute;left:723.20px;top:697.27px" width="11" height="10.5" viewBox="0 0 11 10.5"><use href="#pd" fill="#1f3e98"/></svg>
<div class="t" style="left:748.47px;top:685.34px;font-size:11.5px;color:#1e1e1e;transform:scaleX(0.9400);transform-origin:0 0;">7</div>
<svg style="position:absolute;left:745.98px;top:697.27px" width="11" height="10.5" viewBox="0 0 11 10.5"><use href="#pd" fill="#148f14"/></svg>
<div class="t" style="left:771.25px;top:685.34px;font-size:11.5px;color:#1e1e1e;transform:scaleX(0.9400);transform-origin:0 0;">8</div>
<svg style="position:absolute;left:768.76px;top:697.27px" width="11" height="10.5" viewBox="0 0 11 10.5"><use href="#pd" fill="#1f3e98"/></svg>
<div class="t" style="left:794.03px;top:685.34px;font-size:11.5px;color:#1e1e1e;transform:scaleX(0.9400);transform-origin:0 0;">9</div>
<svg style="position:absolute;left:791.54px;top:697.27px" width="11" height="10.5" viewBox="0 0 11 10.5"><use href="#pd" fill="#148f14"/></svg>
<div class="t" style="left:813.81px;top:685.34px;font-size:11.5px;color:#1e1e1e;transform:scaleX(0.9400);transform-origin:0 0;">10</div>
<svg style="position:absolute;left:814.32px;top:697.27px" width="11" height="10.5" viewBox="0 0 11 10.5"><use href="#pd" fill="#1f3e98"/></svg>
<div class="t" style="left:836.99px;top:685.34px;font-size:11.5px;color:#1e1e1e;transform:scaleX(0.9400);transform-origin:0 0;">11</div>
<svg style="position:absolute;left:837.10px;top:697.27px" width="11" height="10.5" viewBox="0 0 11 10.5"><use href="#pd" fill="#148f14"/></svg>
<div class="t" style="left:859.37px;top:685.34px;font-size:11.5px;color:#1e1e1e;transform:scaleX(0.9400);transform-origin:0 0;">12</div>
<svg style="position:absolute;left:859.88px;top:697.27px" width="11" height="10.5" viewBox="0 0 11 10.5"><use href="#pd" fill="#1f3e98"/></svg>
<div class="t" style="left:882.15px;top:685.34px;font-size:11.5px;color:#1e1e1e;transform:scaleX(0.9400);transform-origin:0 0;">13</div>
<svg style="position:absolute;left:882.66px;top:697.27px" width="11" height="10.5" viewBox="0 0 11 10.5"><use href="#pd" fill="#148f14"/></svg>
<div class="t" style="left:904.93px;top:685.34px;font-size:11.5px;color:#1e1e1e;transform:scaleX(0.9400);transform-origin:0 0;">14</div>
<svg style="position:absolute;left:905.44px;top:697.27px" width="11" height="10.5" viewBox="0 0 11 10.5"><use href="#pd" fill="#1f3e98"/></svg>
<div class="t" style="left:927.71px;top:685.34px;font-size:11.5px;color:#1e1e1e;transform:scaleX(0.9400);transform-origin:0 0;">15</div>
<svg style="position:absolute;left:928.22px;top:697.27px" width="11" height="10.5" viewBox="0 0 11 10.5"><use href="#pd" fill="#148f14"/></svg>
<div class="t" style="left:950.49px;top:685.34px;font-size:11.5px;color:#1e1e1e;transform:scaleX(0.9400);transform-origin:0 0;">16</div>
<svg style="position:absolute;left:951.00px;top:697.27px" width="11" height="10.5" viewBox="0 0 11 10.5"><use href="#pd" fill="#1f3e98"/></svg>
<div class="t" style="left:973.27px;top:685.34px;font-size:11.5px;color:#1e1e1e;transform:scaleX(0.9400);transform-origin:0 0;">17</div>
<svg style="position:absolute;left:973.78px;top:697.27px" width="11" height="10.5" viewBox="0 0 11 10.5"><use href="#pd" fill="#148f14"/></svg>
<div class="t" style="left:996.05px;top:685.34px;font-size:11.5px;color:#1e1e1e;transform:scaleX(0.9400);transform-origin:0 0;">18</div>
<svg style="position:absolute;left:996.56px;top:697.27px" width="11" height="10.5" viewBox="0 0 11 10.5"><use href="#pd" fill="#1f3e98"/></svg>
<div class="t" style="left:1018.83px;top:685.34px;font-size:11.5px;color:#1e1e1e;transform:scaleX(0.9400);transform-origin:0 0;">19</div>
<svg style="position:absolute;left:1019.34px;top:697.27px" width="11" height="10.5" viewBox="0 0 11 10.5"><use href="#pd" fill="#148f14"/></svg>
<div class="t" style="left:1041.61px;top:685.34px;font-size:11.5px;color:#1e1e1e;transform:scaleX(0.9400);transform-origin:0 0;">20</div>
<svg style="position:absolute;left:1042.12px;top:697.27px" width="11" height="10.5" viewBox="0 0 11 10.5"><use href="#pd" fill="#1f3e98"/></svg>
<div class="t" style="left:1064.39px;top:685.34px;font-size:11.5px;color:#1e1e1e;transform:scaleX(0.9400);transform-origin:0 0;">21</div>
<svg style="position:absolute;left:1064.90px;top:697.27px" width="11" height="10.5" viewBox="0 0 11 10.5"><use href="#pd" fill="#148f14"/></svg>
<div class="t" style="left:1087.17px;top:685.34px;font-size:11.5px;color:#1e1e1e;transform:scaleX(0.9400);transform-origin:0 0;">22</div>
<svg style="position:absolute;left:1087.68px;top:697.27px" width="11" height="10.5" viewBox="0 0 11 10.5"><use href="#pd" fill="#1f3e98"/></svg>
<div class="t" style="left:1109.95px;top:685.34px;font-size:11.5px;color:#1e1e1e;transform:scaleX(0.9400);transform-origin:0 0;">23</div>
<svg style="position:absolute;left:1110.46px;top:697.27px" width="11" height="10.5" viewBox="0 0 11 10.5"><use href="#pd" fill="#148f14"/></svg>
<div class="t" style="left:1132.73px;top:685.34px;font-size:11.5px;color:#1e1e1e;transform:scaleX(0.9400);transform-origin:0 0;">24</div>
<svg style="position:absolute;left:1133.24px;top:697.27px" width="11" height="10.5" viewBox="0 0 11 10.5"><use href="#pd" fill="#1f3e98"/></svg>
<div class="t" style="left:1155.51px;top:685.34px;font-size:11.5px;color:#1e1e1e;transform:scaleX(0.9400);transform-origin:0 0;">25</div>
<svg style="position:absolute;left:1156.02px;top:697.27px" width="11" height="10.5" viewBox="0 0 11 10.5"><use href="#pd" fill="#484848"/></svg>
<div style="left:534px;top:724.2px;width:8.5px;height:64.925px;background:#b9b9be;"></div>
<div style="left:1242px;top:724.2px;width:8.5px;height:64.925px;background:#b9b9be;"></div>
<div style="left:542.5px;top:786.625px;width:699.5px;height:2.5px;background:#b6b7bb;"></div>
<div style="left:542.5px;top:724.2px;width:699.5px;height:62.425px;background:#f4f6f8;"></div>
<div style="left:543.8px;top:724.4000000000001px;width:696.4px;height:11px;background:linear-gradient(#99c0ea,#8db2dc 55%,#8398b6 90%,#7b8596);"></div>
<div style="left:543.5px;top:735.2px;width:697px;height:49.925px;background:linear-gradient(170deg,#d5e3d2,#c3d8bf 50%,#b6cfb2);"></div>
<div class="t" style="left:546.80px;top:724.81px;font-size:9.2px;color:#eef4ff;transform:scaleX(0.9800);transform-origin:0 0;">PFC-29</div>
<div class="t" style="left:1220.40px;top:725.63px;font-size:8px;color:#dce8f6;">V</div>
<div class="t" style="left:1230.30px;top:725.63px;font-size:8px;color:#dce8f6;">H</div>
<div class="t" style="left:611.79px;top:751.27px;font-size:11.5px;color:#1e1e1e;transform:scaleX(0.9400);transform-origin:0 0;">1</div>
<svg style="position:absolute;left:609.30px;top:763.20px" width="11" height="10.5" viewBox="0 0 11 10.5"><use href="#pd" fill="#484848"/></svg>
<div class="t" style="left:634.57px;top:751.27px;font-size:11.5px;color:#1e1e1e;transform:scaleX(0.9400);transform-origin:0 0;">2</div>
<svg style="position:absolute;left:632.08px;top:763.20px" width="11" height="10.5" viewBox="0 0 11 10.5"><use href="#pd" fill="#484848"/></svg>
<div class="t" style="left:657.35px;top:751.27px;font-size:11.5px;color:#1e1e1e;transform:scaleX(0.9400);transform-origin:0 0;">3</div>
<svg style="position:absolute;left:654.86px;top:763.20px" width="11" height="10.5" viewBox="0 0 11 10.5"><use href="#pd" fill="#484848"/></svg>
<div class="t" style="left:680.13px;top:751.27px;font-size:11.5px;color:#1e1e1e;transform:scaleX(0.9400);transform-origin:0 0;">4</div>
<svg style="position:absolute;left:677.64px;top:763.20px" width="11" height="10.5" viewBox="0 0 11 10.5"><use href="#pd" fill="#484848"/></svg>
<div class="t" style="left:702.91px;top:751.27px;font-size:11.5px;color:#1e1e1e;transform:scaleX(0.9400);transform-origin:0 0;">5</div>
<svg style="position:absolute;left:700.42px;top:763.20px" width="11" height="10.5" viewBox="0 0 11 10.5"><use href="#pd" fill="#484848"/></svg>
<div class="t" style="left:725.69px;top:751.27px;font-size:11.5px;color:#1e1e1e;transform:scaleX(0.9400);transform-origin:0 0;">6</div>
<svg style="position:absolute;left:723.20px;top:763.20px" width="11" height="10.5" viewBox="0 0 11 10.5"><use href="#pd" fill="#484848"/></svg>
<div class="t" style="left:748.47px;top:751.27px;font-size:11.5px;color:#1e1e1e;transform:scaleX(0.9400);transform-origin:0 0;">7</div>
<svg style="position:absolute;left:745.98px;top:763.20px" width="11" height="10.5" viewBox="0 0 11 10.5"><use href="#pd" fill="#484848"/></svg>
<div class="t" style="left:771.25px;top:751.27px;font-size:11.5px;color:#1e1e1e;transform:scaleX(0.9400);transform-origin:0 0;">8</div>
<svg style="position:absolute;left:768.76px;top:763.20px" width="11" height="10.5" viewBox="0 0 11 10.5"><use href="#pd" fill="#484848"/></svg>
<div class="t" style="left:794.03px;top:751.27px;font-size:11.5px;color:#1e1e1e;transform:scaleX(0.9400);transform-origin:0 0;">9</div>
<svg style="position:absolute;left:791.54px;top:763.20px" width="11" height="10.5" viewBox="0 0 11 10.5"><use href="#pd" fill="#484848"/></svg>
<div class="t" style="left:813.81px;top:751.27px;font-size:11.5px;color:#1e1e1e;transform:scaleX(0.9400);transform-origin:0 0;">10</div>
<svg style="position:absolute;left:814.32px;top:763.20px" width="11" height="10.5" viewBox="0 0 11 10.5"><use href="#pd" fill="#484848"/></svg>
<div class="t" style="left:836.99px;top:751.27px;font-size:11.5px;color:#1e1e1e;transform:scaleX(0.9400);transform-origin:0 0;">11</div>
<svg style="position:absolute;left:837.10px;top:763.20px" width="11" height="10.5" viewBox="0 0 11 10.5"><use href="#pd" fill="#484848"/></svg>
<div class="t" style="left:859.37px;top:751.27px;font-size:11.5px;color:#1e1e1e;transform:scaleX(0.9400);transform-origin:0 0;">12</div>
<svg style="position:absolute;left:859.88px;top:763.20px" width="11" height="10.5" viewBox="0 0 11 10.5"><use href="#pd" fill="#484848"/></svg>
<div class="t" style="left:882.15px;top:751.27px;font-size:11.5px;color:#1e1e1e;transform:scaleX(0.9400);transform-origin:0 0;">13</div>
<svg style="position:absolute;left:882.66px;top:763.20px" width="11" height="10.5" viewBox="0 0 11 10.5"><use href="#pd" fill="#484848"/></svg>
<div class="t" style="left:904.93px;top:751.27px;font-size:11.5px;color:#1e1e1e;transform:scaleX(0.9400);transform-origin:0 0;">14</div>
<svg style="position:absolute;left:905.44px;top:763.20px" width="11" height="10.5" viewBox="0 0 11 10.5"><use href="#pd" fill="#484848"/></svg>
<div class="t" style="left:927.71px;top:751.27px;font-size:11.5px;color:#1e1e1e;transform:scaleX(0.9400);transform-origin:0 0;">15</div>
<svg style="position:absolute;left:928.22px;top:763.20px" width="11" height="10.5" viewBox="0 0 11 10.5"><use href="#pd" fill="#484848"/></svg>
<div class="t" style="left:950.49px;top:751.27px;font-size:11.5px;color:#1e1e1e;transform:scaleX(0.9400);transform-origin:0 0;">16</div>
<svg style="position:absolute;left:951.00px;top:763.20px" width="11" height="10.5" viewBox="0 0 11 10.5"><use href="#pd" fill="#484848"/></svg>
<div class="t" style="left:973.27px;top:751.27px;font-size:11.5px;color:#1e1e1e;transform:scaleX(0.9400);transform-origin:0 0;">17</div>
<svg style="position:absolute;left:973.78px;top:763.20px" width="11" height="10.5" viewBox="0 0 11 10.5"><use href="#pd" fill="#484848"/></svg>
<div class="t" style="left:996.05px;top:751.27px;font-size:11.5px;color:#1e1e1e;transform:scaleX(0.9400);transform-origin:0 0;">18</div>
<svg style="position:absolute;left:996.56px;top:763.20px" width="11" height="10.5" viewBox="0 0 11 10.5"><use href="#pd" fill="#484848"/></svg>
<div class="t" style="left:1018.83px;top:751.27px;font-size:11.5px;color:#1e1e1e;transform:scaleX(0.9400);transform-origin:0 0;">19</div>
<svg style="position:absolute;left:1019.34px;top:763.20px" width="11" height="10.5" viewBox="0 0 11 10.5"><use href="#pd" fill="#484848"/></svg>
<div class="t" style="left:1041.61px;top:751.27px;font-size:11.5px;color:#1e1e1e;transform:scaleX(0.9400);transform-origin:0 0;">20</div>
<svg style="position:absolute;left:1042.12px;top:763.20px" width="11" height="10.5" viewBox="0 0 11 10.5"><use href="#pd" fill="#484848"/></svg>
<div class="t" style="left:1064.39px;top:751.27px;font-size:11.5px;color:#1e1e1e;transform:scaleX(0.9400);transform-origin:0 0;">21</div>
<svg style="position:absolute;left:1064.90px;top:763.20px" width="11" height="10.5" viewBox="0 0 11 10.5"><use href="#pd" fill="#484848"/></svg>
<div class="t" style="left:1087.17px;top:751.27px;font-size:11.5px;color:#1e1e1e;transform:scaleX(0.9400);transform-origin:0 0;">22</div>
<svg style="position:absolute;left:1087.68px;top:763.20px" width="11" height="10.5" viewBox="0 0 11 10.5"><use href="#pd" fill="#484848"/></svg>
<div class="t" style="left:1109.95px;top:751.27px;font-size:11.5px;color:#1e1e1e;transform:scaleX(0.9400);transform-origin:0 0;">23</div>
<svg style="position:absolute;left:1110.46px;top:763.20px" width="11" height="10.5" viewBox="0 0 11 10.5"><use href="#pd" fill="#484848"/></svg>
<div class="t" style="left:1132.73px;top:751.27px;font-size:11.5px;color:#1e1e1e;transform:scaleX(0.9400);transform-origin:0 0;">24</div>
<svg style="position:absolute;left:1133.24px;top:763.20px" width="11" height="10.5" viewBox="0 0 11 10.5"><use href="#pd" fill="#484848"/></svg>
<div class="t" style="left:1155.51px;top:751.27px;font-size:11.5px;color:#1e1e1e;transform:scaleX(0.9400);transform-origin:0 0;">25</div>
<svg style="position:absolute;left:1156.02px;top:763.20px" width="11" height="10.5" viewBox="0 0 11 10.5"><use href="#pd" fill="#484848"/></svg>
<div style="left:534px;top:790.125px;width:8.5px;height:130.85px;background:#b9b9be;"></div>
<div style="left:1242px;top:790.125px;width:8.5px;height:130.85px;background:#b9b9be;"></div>
<div style="left:542.5px;top:918.475px;width:699.5px;height:2.5px;background:#b6b7bb;"></div>
<div style="left:542.5px;top:790.125px;width:699.5px;height:128.35px;background:#f4f6f8;"></div>
<div style="left:543.8px;top:790.325px;width:696.4px;height:16px;background:linear-gradient(#99c0ea,#8db2dc 55%,#8398b6 90%,#7b8596);"></div>
<div style="left:543.5px;top:806.125px;width:697px;height:110.85px;background:linear-gradient(170deg,#f1f3f6,#e7eaee);"></div>
<div class="t" style="left:546.80px;top:792.37px;font-size:12px;color:#eef4ff;transform:scaleX(1.0300);transform-origin:0 0;">Rangierpanel</div>
<div class="t" style="left:1211.40px;top:793.81px;font-size:11px;color:#eaf1fa;">V</div>
<div class="t" style="left:1226.00px;top:793.81px;font-size:11px;color:#eaf1fa;">H</div>
<div class="t" style="left:708.00px;top:832.41px;font-size:67px;color:#b9bcc0;transform:scaleX(0.9233);transform-origin:0 0;">Rangierpanel</div>
<div style="left:534px;top:921.9749999999999px;width:8.5px;height:64.925px;background:#b9b9be;"></div>
<div style="left:1242px;top:921.9749999999999px;width:8.5px;height:64.925px;background:#b9b9be;"></div>
<div style="left:542.5px;top:984.3999999999999px;width:699.5px;height:2.5px;background:#b6b7bb;"></div>
<div style="left:542.5px;top:921.9749999999999px;width:699.5px;height:62.425px;background:#f4f6f8;"></div>
<div style="left:543.8px;top:922.175px;width:696.4px;height:11px;background:linear-gradient(#99c0ea,#8db2dc 55%,#8398b6 90%,#7b8596);"></div>
<div style="left:543.5px;top:932.9749999999999px;width:697px;height:49.925px;background:linear-gradient(170deg,#d5e3d2,#c3d8bf 50%,#b6cfb2);"></div>
<div class="t" style="left:546.80px;top:922.59px;font-size:9.2px;color:#eef4ff;transform:scaleX(0.9800);transform-origin:0 0;">PFC-26</div>
<div class="t" style="left:1220.40px;top:923.40px;font-size:8px;color:#dce8f6;">V</div>
<div class="t" style="left:1230.30px;top:923.40px;font-size:8px;color:#dce8f6;">H</div>
<div class="t" style="left:611.79px;top:949.04px;font-size:11.5px;color:#1e1e1e;transform:scaleX(0.9400);transform-origin:0 0;">1</div>
<svg style="position:absolute;left:609.30px;top:960.97px" width="11" height="10.5" viewBox="0 0 11 10.5"><use href="#pd" fill="#148f14"/></svg>
<div class="t" style="left:634.57px;top:949.04px;font-size:11.5px;color:#1e1e1e;transform:scaleX(0.9400);transform-origin:0 0;">2</div>
<svg style="position:absolute;left:632.08px;top:960.97px" width="11" height="10.5" viewBox="0 0 11 10.5"><use href="#pd" fill="#148f14"/></svg>
<div class="t" style="left:657.35px;top:949.04px;font-size:11.5px;color:#1e1e1e;transform:scaleX(0.9400);transform-origin:0 0;">3</div>
<svg style="position:absolute;left:654.86px;top:960.97px" width="11" height="10.5" viewBox="0 0 11 10.5"><use href="#pd" fill="#148f14"/></svg>
<div class="t" style="left:680.13px;top:949.04px;font-size:11.5px;color:#1e1e1e;transform:scaleX(0.9400);transform-origin:0 0;">4</div>
<svg style="position:absolute;left:677.64px;top:960.97px" width="11" height="10.5" viewBox="0 0 11 10.5"><use href="#pd" fill="#148f14"/></svg>
<div class="t" style="left:702.91px;top:949.04px;font-size:11.5px;color:#1e1e1e;transform:scaleX(0.9400);transform-origin:0 0;">5</div>
<svg style="position:absolute;left:700.42px;top:960.97px" width="11" height="10.5" viewBox="0 0 11 10.5"><use href="#pd" fill="#148f14"/></svg>
<div class="t" style="left:725.69px;top:949.04px;font-size:11.5px;color:#1e1e1e;transform:scaleX(0.9400);transform-origin:0 0;">6</div>
<svg style="position:absolute;left:723.20px;top:960.97px" width="11" height="10.5" viewBox="0 0 11 10.5"><use href="#pd" fill="#148f14"/></svg>
<div class="t" style="left:748.47px;top:949.04px;font-size:11.5px;color:#1e1e1e;transform:scaleX(0.9400);transform-origin:0 0;">7</div>
<svg style="position:absolute;left:745.98px;top:960.97px" width="11" height="10.5" viewBox="0 0 11 10.5"><use href="#pd" fill="#148f14"/></svg>
<div class="t" style="left:771.25px;top:949.04px;font-size:11.5px;color:#1e1e1e;transform:scaleX(0.9400);transform-origin:0 0;">8</div>
<svg style="position:absolute;left:768.76px;top:960.97px" width="11" height="10.5" viewBox="0 0 11 10.5"><use href="#pd" fill="#148f14"/></svg>
<div class="t" style="left:794.03px;top:949.04px;font-size:11.5px;color:#1e1e1e;transform:scaleX(0.9400);transform-origin:0 0;">9</div>
<svg style="position:absolute;left:791.54px;top:960.97px" width="11" height="10.5" viewBox="0 0 11 10.5"><use href="#pd" fill="#148f14"/></svg>
<div class="t" style="left:813.81px;top:949.04px;font-size:11.5px;color:#1e1e1e;transform:scaleX(0.9400);transform-origin:0 0;">10</div>
<svg style="position:absolute;left:814.32px;top:960.97px" width="11" height="10.5" viewBox="0 0 11 10.5"><use href="#pd" fill="#148f14"/></svg>
<div class="t" style="left:836.99px;top:949.04px;font-size:11.5px;color:#1e1e1e;transform:scaleX(0.9400);transform-origin:0 0;">11</div>
<svg style="position:absolute;left:837.10px;top:960.97px" width="11" height="10.5" viewBox="0 0 11 10.5"><use href="#pd" fill="#148f14"/></svg>
<div class="t" style="left:859.37px;top:949.04px;font-size:11.5px;color:#1e1e1e;transform:scaleX(0.9400);transform-origin:0 0;">12</div>
<svg style="position:absolute;left:859.88px;top:960.97px" width="11" height="10.5" viewBox="0 0 11 10.5"><use href="#pd" fill="#148f14"/></svg>
<div class="t" style="left:882.15px;top:949.04px;font-size:11.5px;color:#1e1e1e;transform:scaleX(0.9400);transform-origin:0 0;">13</div>
<svg style="position:absolute;left:882.66px;top:960.97px" width="11" height="10.5" viewBox="0 0 11 10.5"><use href="#pd" fill="#148f14"/></svg>
<div class="t" style="left:904.93px;top:949.04px;font-size:11.5px;color:#1e1e1e;transform:scaleX(0.9400);transform-origin:0 0;">14</div>
<svg style="position:absolute;left:905.44px;top:960.97px" width="11" height="10.5" viewBox="0 0 11 10.5"><use href="#pd" fill="#148f14"/></svg>
<div class="t" style="left:927.71px;top:949.04px;font-size:11.5px;color:#1e1e1e;transform:scaleX(0.9400);transform-origin:0 0;">15</div>
<svg style="position:absolute;left:928.22px;top:960.97px" width="11" height="10.5" viewBox="0 0 11 10.5"><use href="#pd" fill="#148f14"/></svg>
<div class="t" style="left:950.49px;top:949.04px;font-size:11.5px;color:#1e1e1e;transform:scaleX(0.9400);transform-origin:0 0;">16</div>
<svg style="position:absolute;left:951.00px;top:960.97px" width="11" height="10.5" viewBox="0 0 11 10.5"><use href="#pd" fill="#1f3e98"/></svg>
<div class="t" style="left:973.27px;top:949.04px;font-size:11.5px;color:#1e1e1e;transform:scaleX(0.9400);transform-origin:0 0;">17</div>
<svg style="position:absolute;left:973.78px;top:960.97px" width="11" height="10.5" viewBox="0 0 11 10.5"><use href="#pd" fill="#1f3e98"/></svg>
<div class="t" style="left:996.05px;top:949.04px;font-size:11.5px;color:#1e1e1e;transform:scaleX(0.9400);transform-origin:0 0;">18</div>
<svg style="position:absolute;left:996.56px;top:960.97px" width="11" height="10.5" viewBox="0 0 11 10.5"><use href="#pd" fill="#1f3e98"/></svg>
<div class="t" style="left:1018.83px;top:949.04px;font-size:11.5px;color:#1e1e1e;transform:scaleX(0.9400);transform-origin:0 0;">19</div>
<svg style="position:absolute;left:1019.34px;top:960.97px" width="11" height="10.5" viewBox="0 0 11 10.5"><use href="#pd" fill="#1f3e98"/></svg>
<div class="t" style="left:1041.61px;top:949.04px;font-size:11.5px;color:#1e1e1e;transform:scaleX(0.9400);transform-origin:0 0;">20</div>
<svg style="position:absolute;left:1042.12px;top:960.97px" width="11" height="10.5" viewBox="0 0 11 10.5"><use href="#pd" fill="#1f3e98"/></svg>
<div class="t" style="left:1064.39px;top:949.04px;font-size:11.5px;color:#1e1e1e;transform:scaleX(0.9400);transform-origin:0 0;">21</div>
<svg style="position:absolute;left:1064.90px;top:960.97px" width="11" height="10.5" viewBox="0 0 11 10.5"><use href="#pd" fill="#1f3e98"/></svg>
<div class="t" style="left:1087.17px;top:949.04px;font-size:11.5px;color:#1e1e1e;transform:scaleX(0.9400);transform-origin:0 0;">22</div>
<svg style="position:absolute;left:1087.68px;top:960.97px" width="11" height="10.5" viewBox="0 0 11 10.5"><use href="#pd" fill="#1f3e98"/></svg>
<div class="t" style="left:1109.95px;top:949.04px;font-size:11.5px;color:#1e1e1e;transform:scaleX(0.9400);transform-origin:0 0;">23</div>
<svg style="position:absolute;left:1110.46px;top:960.97px" width="11" height="10.5" viewBox="0 0 11 10.5"><use href="#pd" fill="#1f3e98"/></svg>
<div class="t" style="left:1132.73px;top:949.04px;font-size:11.5px;color:#1e1e1e;transform:scaleX(0.9400);transform-origin:0 0;">24</div>
<svg style="position:absolute;left:1133.24px;top:960.97px" width="11" height="10.5" viewBox="0 0 11 10.5"><use href="#pd" fill="#1f3e98"/></svg>
<div class="t" style="left:1155.51px;top:949.04px;font-size:11.5px;color:#1e1e1e;transform:scaleX(0.9400);transform-origin:0 0;">25</div>
<svg style="position:absolute;left:1156.02px;top:960.97px" width="11" height="10.5" viewBox="0 0 11 10.5"><use href="#pd" fill="#1f3e98"/></svg>
<div class="t" style="left:1343.40px;top:91.26px;font-size:16px;color:#6b6b6b;transform:scaleX(1.0257);transform-origin:0 0;">Gebäudeanbindung RZ | Keller |</div>
<div class="t" style="left:1343.40px;top:265.96px;font-size:16px;color:#1e1e1e;transform:scaleX(0.8716);transform-origin:0 0;">SWBIO01</div>
<div class="t" style="left:1424.00px;top:266.80px;font-size:15px;color:#1e1e1e;transform:scaleX(0.9099);transform-origin:0 0;">Umgeb</div>
<div style="left:1419.5px;top:262px;width:69px;height:22.5px;background:rgba(120,196,120,0.62);border-radius:3px;"></div>
<svg style="position:absolute;left:1251px;top:262px;" width="234" height="21" viewBox="0 0 234 21"><path d="M0.5 10.5 L7 0 H233 L229 5.5 V15.5 L233 21 H7 Z" fill="rgb(13,129,13)" fill-opacity="0.93"/></svg>
<div class="t" style="left:1264.30px;top:264.22px;font-size:12.5px;color:#ffffff;transform:scaleX(1.0001);transform-origin:0 0;">WO-20210915-1 Drucker aufstelle</div>
<div style="left:1493px;top:262px;width:85px;height:22.8px;background:#f6e4e8;border-radius:3px;"></div>
<div class="t" style="left:1497.00px;top:267.84px;font-size:12px;color:#1e1e1e;transform:scaleX(0.9595);transform-origin:0 0;">IOS XE 17.1</div>
<div class="t" style="left:1343.40px;top:288.86px;font-size:16px;color:#6b6b6b;transform:scaleX(1.0281);transform-origin:0 0;">Layer 2 Switch / LAN Etagenversorgung</div>
<div class="t" style="left:1343.40px;top:463.46px;font-size:16px;color:#1e1e1e;transform:scaleX(0.9433);transform-origin:0 0;">PFC-33</div>
<svg style="position:absolute;left:1251px;top:459.5px;" width="234" height="21" viewBox="0 0 234 21"><path d="M0.5 10.5 L7 0 H233 L229 5.5 V15.5 L233 21 H7 Z" fill="rgb(13,129,13)" fill-opacity="0.93"/></svg>
<div class="t" style="left:1264.30px;top:462.32px;font-size:12.5px;color:#ffffff;transform:scaleX(1.0001);transform-origin:0 0;">WO-20210915-1 Drucker aufstelle</div>
<div class="t" style="left:1343.40px;top:486.76px;font-size:16px;color:#6b6b6b;transform:scaleX(1.0536);transform-origin:0 0;">Datendosen / Büro Verkabelung</div>
<div class="t" style="left:1343.40px;top:528.66px;font-size:16px;color:#1e1e1e;transform:scaleX(0.9433);transform-origin:0 0;">PFC-32</div>
<div class="t" style="left:1343.40px;top:552.86px;font-size:16px;color:#6b6b6b;transform:scaleX(1.0536);transform-origin:0 0;">Datendosen / Büro Verkabelung</div>
<div class="t" style="left:1343.40px;top:660.46px;font-size:16px;color:#1e1e1e;transform:scaleX(0.9433);transform-origin:0 0;">PFC-30</div>
<div class="t" style="left:1343.40px;top:684.66px;font-size:16px;color:#6b6b6b;transform:scaleX(1.0546);transform-origin:0 0;">Telefondosen / Büro Verkabelung</div>
<div class="t" style="left:1343.40px;top:726.56px;font-size:16px;color:#1e1e1e;transform:scaleX(0.9433);transform-origin:0 0;">PFC-29</div>
<div class="t" style="left:1343.40px;top:750.86px;font-size:16px;color:#6b6b6b;transform:scaleX(1.0546);transform-origin:0 0;">Telefondosen / Büro Verkabelung</div>
<div class="t" style="left:1343.40px;top:923.86px;font-size:16px;color:#1e1e1e;transform:scaleX(0.9324);transform-origin:0 0;">PFC-26</div>
<div style="left:1403px;top:921px;width:115.3px;height:23.3px;background:#e9e8fc;border-radius:3px;"></div>
<div class="t" style="left:1407.00px;top:926.62px;font-size:12.5px;color:#1e1e1e;transform:scaleX(1.0034);transform-origin:0 0;">» Rechenzentrum</div>
<div class="t" style="left:1343.40px;top:948.16px;font-size:16px;color:#6b6b6b;transform:scaleX(1.0386);transform-origin:0 0;">Anbindung HVT Bucht 1</div>
<svg style="position:absolute;left:1858px;top:835px;" width="34" height="34" viewBox="0 0 34 34"><circle cx="13.3" cy="13.7" r="10.2" fill="none" stroke="#a3a3a3" stroke-width="2.8"/><path d="M13.3 8.2 V19.2 M7.8 13.7 H18.8" stroke="#a3a3a3" stroke-width="1.9"/><path d="M23.2 24.2 L30 29.8" stroke="#a3a3a3" stroke-width="3.8"/></svg>
<svg style="position:absolute;left:1858px;top:870px;" width="34" height="34" viewBox="0 0 34 34"><circle cx="13.3" cy="13.3" r="10.2" fill="none" stroke="#a3a3a3" stroke-width="2.8"/><path d="M7.8 13.3 H18.8" stroke="#a3a3a3" stroke-width="1.9"/><path d="M23.2 23.8 L30 29.4" stroke="#a3a3a3" stroke-width="3.8"/></svg>
<svg style="position:absolute;left:1860px;top:908px;" width="28" height="28" viewBox="0 0 28 28"><path d="M3.1 11 V2.6 H11.5 M15.5 2.6 H24.9 V11 M24.9 16.5 V24.9 H15.5 M11.5 24.9 H3.1 V16.5" fill="none" stroke="#a3a3a3" stroke-width="2.3"/></svg>
<svg style="position:absolute;left:1859px;top:941px;" width="31" height="31" viewBox="0 0 31 31"><rect x="4.5" y="4.5" width="22" height="22" fill="none" stroke="#a3a3a3" stroke-width="1.6"/><rect x="2.2" y="2.2" width="4.8" height="4.8" fill="#fff" stroke="#a3a3a3" stroke-width="1.5"/><rect x="24" y="2.2" width="4.8" height="4.8" fill="#fff" stroke="#a3a3a3" stroke-width="1.5"/><rect x="2.2" y="24" width="4.8" height="4.8" fill="#fff" stroke="#a3a3a3" stroke-width="1.5"/><rect x="24" y="24" width="4.8" height="4.8" fill="#fff" stroke="#a3a3a3" stroke-width="1.5"/><path d="M10.2 21.5 L15.4 8.5 L20.6 21.5 M12.2 17 H18.6" fill="none" stroke="#a3a3a3" stroke-width="1.6"/></svg>
<div style="left:1900px;top:225px;width:8px;height:256px;background:#bdbdbd;"></div>
</div></div>
<div style="left:581px;top:283px;width:287px;height:628px;background:#fff;border:1px solid #b4b4b4;box-shadow:2px 2px 3px rgba(0,0,0,0.25);"></div>
<div style="left:583px;top:688px;width:283.5px;height:30px;background:#00a8fd;"></div>
<div class="t" style="left:621.70px;top:292.53px;font-size:14.5px;color:#3a3a3a;transform:scaleX(0.9739);transform-origin:0 0;">Kabel auflegen...</div>
<div class="t" style="left:621.70px;top:322.83px;font-size:14.5px;color:#3a3a3a;transform:scaleX(0.9959);transform-origin:0 0;">Kabel auflegen (erweitert)...</div>
<div class="t" style="left:621.70px;top:353.13px;font-size:14.5px;color:#3a3a3a;transform:scaleX(0.9623);transform-origin:0 0;">Netzwerkplan erzeugen</div>
<div class="t" style="left:621.70px;top:382.93px;font-size:14.5px;color:#3a3a3a;transform:scaleX(0.9591);transform-origin:0 0;">Netzwerkpläne suchen</div>
<div class="t" style="left:621.70px;top:416.23px;font-size:14.5px;color:#3a3a3a;transform:scaleX(0.9435);transform-origin:0 0;">Rückseite anzeigen</div>
<div class="t" style="left:621.70px;top:446.13px;font-size:14.5px;color:#3a3a3a;transform:scaleX(0.9507);transform-origin:0 0;">Ausrichtung</div>
<svg style="position:absolute;left:853.5px;top:447.9px;" width="6" height="10" viewBox="0 0 6 10"><path d="M0.5 0.5 L5.5 5 L0.5 9.5 Z" fill="#222"/></svg>
<div class="t" style="left:621.70px;top:476.43px;font-size:14.5px;color:#3a3a3a;transform:scaleX(0.9559);transform-origin:0 0;">Verschiebe zu Ebene</div>
<svg style="position:absolute;left:853.5px;top:478.2px;" width="6" height="10" viewBox="0 0 6 10"><path d="M0.5 0.5 L5.5 5 L0.5 9.5 Z" fill="#222"/></svg>
<div class="t" style="left:621.70px;top:509.13px;font-size:14.5px;color:#3a3a3a;transform:scaleX(0.9789);transform-origin:0 0;">Benamungsregel anwenden...</div>
<div class="t" style="left:621.70px;top:541.83px;font-size:14.5px;color:#3a3a3a;transform:scaleX(0.9875);transform-origin:0 0;">Umziehen...</div>
<svg style="position:absolute;left:853.5px;top:543.6px;" width="6" height="10" viewBox="0 0 6 10"><path d="M0.5 0.5 L5.5 5 L0.5 9.5 Z" fill="#222"/></svg>
<div class="t" style="left:621.70px;top:572.13px;font-size:14.5px;color:#3a3a3a;transform:scaleX(0.9862);transform-origin:0 0;">Austauschen...</div>
<div class="t" style="left:621.70px;top:602.23px;font-size:14.5px;color:#3a3a3a;transform:scaleX(0.9753);transform-origin:0 0;">Kopieren...</div>
<div class="t" style="left:621.70px;top:632.33px;font-size:14.5px;color:#3a3a3a;transform:scaleX(0.9685);transform-origin:0 0;">Entfernen</div>
<div class="t" style="left:621.70px;top:664.73px;font-size:14.5px;color:#3a3a3a;transform:scaleX(0.9713);transform-origin:0 0;">Verbindungsübersicht...</div>
<div class="t" style="left:621.70px;top:695.03px;font-size:14.5px;color:#ffffff;transform:scaleX(0.9474);transform-origin:0 0;">Reports</div>
<svg style="position:absolute;left:853.5px;top:696.8px;" width="6" height="10" viewBox="0 0 6 10"><path d="M0.5 0.5 L5.5 5 L0.5 9.5 Z" fill="#ffffff"/></svg>
<div class="t" style="left:621.70px;top:725.73px;font-size:14.5px;color:#3a3a3a;transform:scaleX(0.9630);transform-origin:0 0;">Suche enthaltene</div>
<svg style="position:absolute;left:853.5px;top:727.5px;" width="6" height="10" viewBox="0 0 6 10"><path d="M0.5 0.5 L5.5 5 L0.5 9.5 Z" fill="#222"/></svg>
<div class="t" style="left:621.70px;top:758.23px;font-size:14.5px;color:#3a3a3a;transform:scaleX(0.8927);transform-origin:0 0;">SNMP</div>
<svg style="position:absolute;left:853.5px;top:760.0px;" width="6" height="10" viewBox="0 0 6 10"><path d="M0.5 0.5 L5.5 5 L0.5 9.5 Z" fill="#222"/></svg>
<div class="t" style="left:621.70px;top:791.23px;font-size:14.5px;color:#3a3a3a;transform:scaleX(1.0001);transform-origin:0 0;">Externe Tools</div>
<svg style="position:absolute;left:853.5px;top:793.0px;" width="6" height="10" viewBox="0 0 6 10"><path d="M0.5 0.5 L5.5 5 L0.5 9.5 Z" fill="#222"/></svg>
<div class="t" style="left:621.70px;top:823.93px;font-size:14.5px;color:#3a3a3a;transform:scaleX(0.9658);transform-origin:0 0;">Komponentendefinition anpassen</div>
<div class="t" style="left:621.70px;top:857.43px;font-size:14.5px;color:#3a3a3a;transform:scaleX(0.9532);transform-origin:0 0;">Eigenschaften</div>
<div class="t" style="left:621.70px;top:887.73px;font-size:14.5px;color:#3a3a3a;transform:scaleX(1.0009);transform-origin:0 0;">Tags verwalten</div>
<div style="left:616.8px;top:405.6px;width:242.4px;height:1.5px;background:#d9d9d9;"></div>
<div style="left:616.8px;top:499.1px;width:242.4px;height:1.5px;background:#d9d9d9;"></div>
<div style="left:616.8px;top:531.8px;width:242.4px;height:1.5px;background:#d9d9d9;"></div>
<div style="left:616.8px;top:655.3px;width:242.4px;height:1.5px;background:#d9d9d9;"></div>
<div style="left:616.8px;top:748.5999999999999px;width:242.4px;height:1.5px;background:#d9d9d9;"></div>
<div style="left:616.8px;top:781.6999999999999px;width:242.4px;height:1.5px;background:#d9d9d9;"></div>
<div style="left:616.8px;top:814.8px;width:242.4px;height:1.5px;background:#d9d9d9;"></div>
<div style="left:616.8px;top:847.5px;width:242.4px;height:1.5px;background:#d9d9d9;"></div>
<div style="left:866px;top:686px;width:215px;height:216.5px;background:#fff;border:1px solid #b4b4b4;box-shadow:2px 2px 3px rgba(0,0,0,0.25);"></div>
<div style="left:872px;top:720px;width:204px;height:32px;background:#e5f1fb;"></div>
<div style="left:902px;top:718.1px;width:171px;height:1.5px;background:#d9d9d9;"></div>
<div class="t" style="left:907.30px;top:695.53px;font-size:14.5px;color:#3a3a3a;transform:scaleX(0.9780);transform-origin:0 0;">Etikett drucken</div>
<div class="t" style="left:907.30px;top:728.23px;font-size:14.5px;color:#3a3a3a;transform:scaleX(0.9579);transform-origin:0 0;">Patchverbindungen</div>
<div class="t" style="left:907.30px;top:758.23px;font-size:14.5px;color:#3a3a3a;transform:scaleX(0.9666);transform-origin:0 0;">Netzwegübersicht</div>
<div class="t" style="left:907.30px;top:788.23px;font-size:14.5px;color:#3a3a3a;transform:scaleX(0.9560);transform-origin:0 0;">Raumansicht</div>
<div class="t" style="left:907.30px;top:818.23px;font-size:14.5px;color:#3a3a3a;transform:scaleX(0.9643);transform-origin:0 0;">Netzweg</div>
<div class="t" style="left:907.30px;top:848.53px;font-size:14.5px;color:#3a3a3a;transform:scaleX(0.9558);transform-origin:0 0;">Leitungsverbindungen</div>
<div class="t" style="left:907.30px;top:878.53px;font-size:14.5px;color:#3a3a3a;transform:scaleX(0.9724);transform-origin:0 0;">Datendose</div>
<div style="left:44px;top:998px;width:1872px;height:43px;background:#343434;"></div>
<svg style="position:absolute;left:1369px;top:1005px;" width="7" height="29" viewBox="0 0 7 29"><path d="M6 1 H1.5 V28 H6" fill="none" stroke="#9c9c9c" stroke-width="2"/></svg>
<svg style="position:absolute;left:1511px;top:1005px;" width="7" height="29" viewBox="0 0 7 29"><path d="M0.5 1 H5 V28 H0.5" fill="none" stroke="#9c9c9c" stroke-width="2"/></svg>
<svg style="position:absolute;left:1384px;top:1006px;" width="31" height="27" viewBox="0 0 31 27"><path d="M1 10 V26 H30 V10" fill="none" stroke="#8d8d8d" stroke-width="1.5"/><path d="M15.5 0 V19 M9 13 L15.5 19.5 L22 13" fill="none" stroke="#8d8d8d" stroke-width="1.5"/></svg>
<div class="t" style="left:1422.90px;top:1013.05px;font-size:14px;color:#b9b9b9;transform:scaleX(0.9359);transform-origin:0 0;">Hier ablegen</div>
<div class="t" style="left:1536.00px;top:1005.09px;font-size:11px;color:#b9b9b9;transform:scaleX(1.0188);transform-origin:0 0;">Lizenziert: tripunkt GmbH (Christin)</div>
<div class="t" style="left:1536.00px;top:1023.49px;font-size:11px;color:#b9b9b9;transform:scaleX(1.0338);transform-origin:0 0;">Datenbank: localhost\pathfinder [SQLite]</div>
<div class="t" style="left:1759.20px;top:1005.09px;font-size:11px;color:#b9b9b9;transform:scaleX(1.0266);transform-origin:0 0;">© 2001-2023 tripunkt GmbH</div>
<div class="t" style="left:1759.20px;top:1023.49px;font-size:11px;color:#b9b9b9;transform:scaleX(0.9390);transform-origin:0 0;">v3.9.0.326 (64 Bit)</div>
</body></html>
